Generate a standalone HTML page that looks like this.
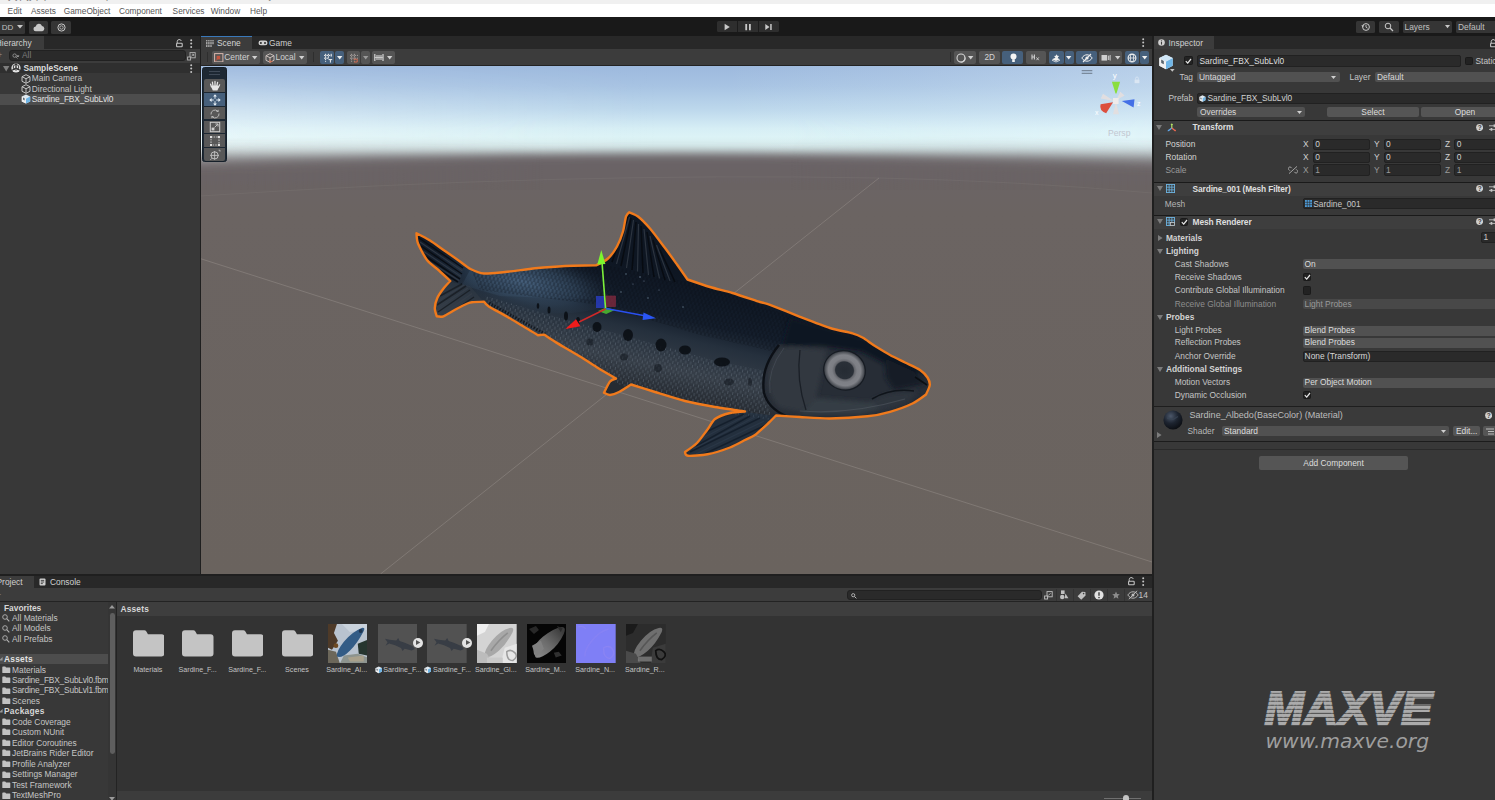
<!DOCTYPE html>
<html><head><meta charset="utf-8"><title>Unity - SampleScene</title>
<style>
*{box-sizing:border-box}
html,body{margin:0;padding:0}
html{overflow:hidden;width:1495px;height:800px;background:#383838}
body{width:1495px;height:800px;position:relative;overflow:hidden;background:#383838;font-family:"Liberation Sans",sans-serif;font-size:8.4px;color:#c6c6c6}
.a{position:absolute}
.t{position:absolute;white-space:nowrap;line-height:11px;height:11px}
.b{font-weight:700}
.dim{color:#8a8a8a}
.btn{position:absolute;background:#555;border-radius:2px}
.dd{position:absolute;background:#515151;border-radius:2px}
.fld{position:absolute;background:#2a2a2a;border-radius:2px;border:1px solid #212121}
.blue{background:#46607c}
.tb{position:absolute;background:#353535;border-radius:1.500px}
</style></head><body>

<div class="a" style="left:0px;top:0px;width:1495px;height:3.7px;background:#f0f0f0;"></div>
<div class="a" style="left:0;top:-9.800px;height:13px;width:1495px;overflow:hidden;color:#777;font-size:9px;line-height:13px;white-space:nowrap;padding-left:2px">Sy yp jy pq &nbsp; &nbsp; &nbsp; &nbsp; &nbsp; &nbsp; &nbsp; &nbsp; &nbsp; &nbsp; &nbsp; &nbsp;p &nbsp; &nbsp; &nbsp; &nbsp; &nbsp; &nbsp; &nbsp; &nbsp; &nbsp; &nbsp; &nbsp; &nbsp; &nbsp; &nbsp; &nbsp; &nbsp; &nbsp; &nbsp; &nbsp; &nbsp; &nbsp; &nbsp; &nbsp; &nbsp; &nbsp; &nbsp; &nbsp; &nbsp; &nbsp; &nbsp; &nbsp; y</div>
<div class="a" style="left:0px;top:3.5px;width:1495px;height:13.5px;background:#ffffff;"></div>
<div class="t " style="left:7.6px;top:5.9px;color:#555;font-size:8.3px">Edit</div>
<div class="t " style="left:31px;top:5.9px;color:#555;font-size:8.3px">Assets</div>
<div class="t " style="left:63.8px;top:5.9px;color:#555;font-size:8.3px">GameObject</div>
<div class="t " style="left:119px;top:5.9px;color:#555;font-size:8.3px">Component</div>
<div class="t " style="left:172.6px;top:5.9px;color:#555;font-size:8.3px">Services</div>
<div class="t " style="left:210.7px;top:5.9px;color:#555;font-size:8.3px">Window</div>
<div class="t " style="left:250px;top:5.9px;color:#555;font-size:8.3px">Help</div>
<div class="a" style="left:0px;top:17px;width:1495px;height:19px;background:#191919;"></div>
<div class="tb" style="left:-3px;top:20.5px;width:28px;height:13px"></div>
<div class="t " style="left:1.8px;top:21.5px;font-size:8px;color:#c0c0c0">DD</div>
<svg class="a" style="left:17px;top:24.5px;" width="6" height="4" viewBox="0 0 6 4"><path d="M0 0h6l-3 3.6z" fill="#c8c8c8"/></svg>
<div class="tb" style="left:28.5px;top:20.5px;width:19.5px;height:13px"></div>
<svg class="a" style="left:32.5px;top:22.5px;" width="12" height="9" viewBox="0 0 12 9"><path d="M3 8.2a2.4 2.4 0 0 1-.3-4.8A3.3 3.3 0 0 1 9 2.9a2.7 2.7 0 0 1 .3 5.3z" fill="#c8c8c8"/></svg>
<div class="tb" style="left:51px;top:20.5px;width:20px;height:13px"></div>
<svg class="a" style="left:56.5px;top:22.5px;" width="9" height="9" viewBox="0 0 9 9"><circle cx="4.5" cy="4.5" r="3.6" fill="none" stroke="#c8c8c8" stroke-width="1"/><circle cx="4.5" cy="4.5" r="1.7" fill="none" stroke="#c8c8c8" stroke-width=".8"/></svg>
<div class="tb" style="left:717px;top:20.5px;width:61.700px;height:11.800px;background:#2e2e2e"></div>
<div class="a" style="left:737.4px;top:20.5px;width:0.9px;height:11.8px;background:#1c1c1c;"></div><div class="a" style="left:757.8px;top:20.5px;width:0.9px;height:11.8px;background:#1c1c1c;"></div>
<svg class="a" style="left:717px;top:20.5px;" width="60" height="12.5" viewBox="0 0 60 12.5"><path d="M7.600 2.800l5.200 3.200-5.200 3.200z" fill="#c8c8c8"/><path d="M28.300 3h1.800v6.200h-1.800zM32 3h1.800v6.200H32z" fill="#c8c8c8"/><path d="M48.300 3l4.200 3-4.200 3zM53.200 3h1.500v6h-1.500z" fill="#c8c8c8"/></svg>
<div class="tb" style="left:1355.5px;top:20.5px;width:19.5px;height:12.5px"></div>
<svg class="a" style="left:1360.5px;top:22px;" width="10" height="10" viewBox="0 0 10 10"><circle cx="5" cy="5" r="3.4" fill="none" stroke="#c8c8c8" stroke-width="1"/><path d="M5 3v2.2l1.5 1" fill="none" stroke="#c8c8c8" stroke-width=".9"/><path d="M0.3 3.2l1.4 2 1.6-1.6z" fill="#c8c8c8"/></svg>
<div class="tb" style="left:1378.5px;top:20.5px;width:20px;height:12.5px"></div>
<svg class="a" style="left:1384px;top:22.2px;" width="10" height="10" viewBox="0 0 10 10"><circle cx="4" cy="4" r="2.8" fill="none" stroke="#c8c8c8" stroke-width="1"/><path d="M6 6l3 3" stroke="#c8c8c8" stroke-width="1.2"/></svg>
<div class="tb" style="left:1402.7px;top:20.5px;width:49.6px;height:12.5px"></div>
<div class="t " style="left:1404.5px;top:21.5px;color:#c0c0c0">Layers</div>
<svg class="a" style="left:1444.5px;top:25px;" width="5" height="4" viewBox="0 0 5 4"><path d="M0 0h5l-2.5 3.2z" fill="#c8c8c8"/></svg>
<div class="tb" style="left:1455.5px;top:20.5px;width:45px;height:12.5px"></div>
<div class="t " style="left:1458px;top:21.5px;color:#c0c0c0">Default</div>
<div class="a" style="left:0px;top:36px;width:200px;height:13px;background:#282828;"></div>
<div class="a" style="left:0px;top:36px;width:44px;height:13px;background:#3c3c3c;"></div>
<div class="t " style="left:-4.2px;top:37.7px;color:#d0d0d0">Hierarchy</div>
<svg class="a" style="left:175.8px;top:38.5px;" width="8" height="9" viewBox="0 0 8 9"><path d="M1.2 4.2V2.6a2.1 2.1 0 0 1 4.1-.6" fill="none" stroke="#c4c4c4" stroke-width="1"/><rect x=".6" y="4.2" width="5.6" height="3.6" rx=".7" fill="none" stroke="#c4c4c4" stroke-width="1.1"/></svg>
<svg class="a" style="left:190px;top:38.5px;" width="3" height="10" viewBox="0 0 3 10"><circle cx="1.2" cy="1.2" r="1" fill="#c4c4c4"/><circle cx="1.2" cy="4.6" r="1" fill="#c4c4c4"/><circle cx="1.2" cy="8" r="1" fill="#c4c4c4"/></svg>
<div class="a" style="left:0px;top:49px;width:200px;height:13.5px;background:#3c3c3c;"></div>
<div class="t " style="left:-3px;top:50.0px;color:#999;font-size:9px">+</div>
<div class="fld" style="left:9px;top:50.2px;width:176.5px;height:10.6px;border-radius:3px"></div>
<svg class="a" style="left:12px;top:53px;" width="8" height="7" viewBox="0 0 8 7"><circle cx="2.6" cy="2.6" r="1.7" fill="none" stroke="#a0a0a0" stroke-width=".8"/><path d="M3.8 3.8l1.800 1.800M4.800 2.800h2.200l-1.100 1.200z" stroke="#a0a0a0" stroke-width=".7" fill="#a0a0a0"/></svg>
<div class="t " style="left:22px;top:50.3px;color:#7c7c7c">All</div>
<svg class="a" style="left:187px;top:51.5px;" width="9" height="9" viewBox="0 0 9 9"><rect x="3" y=".6" width="5.2" height="5.2" fill="none" stroke="#b4b4b4" stroke-width=".9"/><rect x=".6" y="5" width="3" height="3" fill="#383838" stroke="#b4b4b4" stroke-width=".9"/><path d="M4.2 4.6l2.4-2.4M4.8 2.2h1.8v1.8" stroke="#b4b4b4" stroke-width=".8" fill="none"/></svg>
<div class="a" style="left:0px;top:62.5px;width:200px;height:1px;background:#232323;"></div>
<div class="a" style="left:0px;top:62.5px;width:200px;height:10.3px;background:#2f2f2f;"></div>
<svg class="a" style="left:3px;top:65.5px;" width="7" height="6" viewBox="0 0 7 6"><path d="M0 0h6.4L3.2 5.4z" fill="#7e7e7e"/></svg>
<svg class="a" style="left:11.3px;top:63.2px;" width="10" height="10" viewBox="0 0 10 10"><circle cx="5" cy="5" r="4.6" fill="#e4e4e4"/><path d="M5 5V.6M5 5l3.9 2.2M5 5L1.1 7.2" stroke="#2d2d2d" stroke-width="1.3"/><path d="M5 1.2l2.6 1.5v2.9L5 7.2 2.4 5.6V2.7z" fill="none" stroke="#2d2d2d" stroke-width=".9"/></svg>
<div class="t b" style="left:23.4px;top:62.7px;color:#dcdcdc">SampleScene</div>
<svg class="a" style="left:190px;top:63.6px;" width="3" height="10" viewBox="0 0 3 10"><circle cx="1.2" cy="1.2" r="1" fill="#c4c4c4"/><circle cx="1.2" cy="4.6" r="1" fill="#c4c4c4"/><circle cx="1.2" cy="8" r="1" fill="#c4c4c4"/></svg>
<svg class="a" style="left:20.5px;top:73.5px;" width="10" height="10" viewBox="0 0 10 10"><path d="M5 .7l4 2v4.6l-4 2-4-2V2.7z M1 2.7l4 2 4-2 M5 4.7v4.6" fill="none" stroke="#c8c8c8" stroke-width=".95" stroke-linejoin="round"/></svg>
<div class="t " style="left:31.8px;top:73.1px;">Main Camera</div>
<svg class="a" style="left:20.5px;top:84.2px;" width="10" height="10" viewBox="0 0 10 10"><path d="M5 .7l4 2v4.6l-4 2-4-2V2.7z M1 2.7l4 2 4-2 M5 4.7v4.6" fill="none" stroke="#c8c8c8" stroke-width=".95" stroke-linejoin="round"/></svg>
<div class="t " style="left:31.8px;top:83.8px;">Directional Light</div>
<div class="a" style="left:0px;top:94px;width:200px;height:10.7px;background:#4d4d4d;"></div>
<svg class="a" style="left:20.5px;top:94.3px;" width="10" height="10" viewBox="0 0 10 10"><path d="M5 .5l4.2 2.1v4.8L5 9.5.8 7.4V2.6z" fill="#dfe9f0"/><path d="M5 4.7l4.2-2.1v4.8L5 9.5z" fill="#6fb5e6"/><path d="M.8 2.6L5 4.7v4.8L.8 7.4z" fill="#eeeeee"/><path d="M2 3.4v2.2l1.6.8V4.2z" fill="#5a6670"/></svg>
<div class="t " style="left:31.8px;top:94.1px;color:#e0e0e0;letter-spacing:-.18px">Sardine_FBX_SubLvl0</div>
<div class="a" style="left:199.6px;top:36px;width:1.6px;height:540px;background:#1f1f1f;"></div><div class="a" style="left:201px;top:36px;width:951px;height:13px;background:#282828;"></div>
<div class="a" style="left:201px;top:36px;width:51px;height:13px;background:#3c3c3c;"></div>
<div class="a" style="left:201px;top:36px;width:51px;height:1.3px;background:#3a79bb;"></div>
<svg class="a" style="left:205.5px;top:39.5px;" width="8" height="7" viewBox="0 0 8 7"><path d="M.8 0v7M2.9 0v7M5 0v7M7 0v4.5" stroke="#c8c8c8" stroke-width="1.1"/><path d="M0 1.6h8M0 4.6h8" stroke="#3c3c3c" stroke-width=".6"/></svg>
<div class="t " style="left:217px;top:37.7px;color:#d6d6d6">Scene</div>
<svg class="a" style="left:257.5px;top:40.2px;" width="10" height="6" viewBox="0 0 10 6"><rect x=".5" y=".6" width="9" height="4.6" rx="2.3" fill="#d0d0d0"/><circle cx="2.9" cy="2.9" r="1" fill="#282828"/><circle cx="7" cy="2.9" r="1" fill="#282828"/></svg>
<div class="t " style="left:269px;top:37.7px;color:#d0d0d0">Game</div>
<svg class="a" style="left:1141.6px;top:38px;" width="3" height="10" viewBox="0 0 3 10"><circle cx="1.2" cy="1.2" r="1" fill="#c4c4c4"/><circle cx="1.2" cy="4.6" r="1" fill="#c4c4c4"/><circle cx="1.2" cy="8" r="1" fill="#c4c4c4"/></svg>
<div class="a" style="left:201px;top:49px;width:951px;height:17px;background:#3c3c3c;"></div>
<div class="a" style="left:201px;top:65px;width:951px;height:1px;background:#232323;"></div>
<div class="a" style="left:206.5px;top:52px;width:1px;height:10px;background:#2e2e2e;"></div>
<div class="btn " style="left:212px;top:51px;width:47.5px;height:13px"></div>
<svg class="a" style="left:214.2px;top:52.7px;" width="9.5" height="9.5" viewBox="0 0 9.5 9.5"><rect x=".6" y=".6" width="8.3" height="8.3" fill="none" stroke="#d8b7ad" stroke-width="1"/><rect x="2.6" y="2.8" width="3.6" height="3.6" fill="#c4553f"/><path d="M1.5 8l2.2-2.2" stroke="#c4553f" stroke-width=".9"/></svg>
<div class="t " style="left:224.2px;top:52.2px;color:#d0d0d0">Center</div>
<svg class="a" style="left:251.5px;top:56.2px;" width="6" height="4" viewBox="0 0 6 4"><path d="M0 0h5.4l-2.7 3.4z" fill="#d0d0d0"/></svg>
<div class="btn " style="left:263px;top:51px;width:43.5px;height:13px"></div>
<svg class="a" style="left:265.2px;top:52.5px;" width="10" height="10" viewBox="0 0 10 10"><path d="M5 .7l4 2v4.6l-4 2-4-2V2.7z M1 2.7l4 2 4-2 M5 4.7v4.6" fill="none" stroke="#cfc4c0" stroke-width=".95" stroke-linejoin="round"/><path d="M5 9.3V6.6M5 9.3L7.6 8" stroke="#d06a4a" stroke-width="1"/></svg>
<div class="t " style="left:275.5px;top:52.2px;color:#d0d0d0">Local</div>
<svg class="a" style="left:298.5px;top:56.2px;" width="6" height="4" viewBox="0 0 6 4"><path d="M0 0h5.4l-2.7 3.4z" fill="#d0d0d0"/></svg>
<div class="a" style="left:313px;top:52px;width:1px;height:10px;background:#2e2e2e;"></div>
<div class="btn blue" style="left:320.4px;top:51px;width:14px;height:13px"></div><div class="btn blue" style="left:335px;top:51px;width:8.7px;height:13px"></div>
<svg class="a" style="left:322.5px;top:52.8px;" width="10" height="10" viewBox="0 0 10 10"><path d="M1 2.4h8M1 5.2h5M2.6 .8v8M5.4 .8v5.2M8.2 .8v3" stroke="#f0f0f0" stroke-width="1" stroke-dasharray="1.6 .8"/><path d="M5.6 6.6h3.6M7.4 6.6v3" stroke="#f0f0f0" stroke-width="1"/></svg>
<svg class="a" style="left:336.8px;top:56.2px;" width="6" height="4" viewBox="0 0 6 4"><path d="M0 0h5.4l-2.7 3.4z" fill="#f0f0f0"/></svg>
<div class="btn " style="left:346.8px;top:51px;width:13.5px;height:13px"></div><div class="btn " style="left:361px;top:51px;width:9px;height:13px"></div>
<svg class="a" style="left:348.6px;top:52.8px;" width="10" height="10" viewBox="0 0 10 10"><path d="M1 2.4h8M1 5.2h8M2.6 .8v8M5.4 .8v8" stroke="#b0a9a6" stroke-width=".9" stroke-dasharray="1.4 .9"/><path d="M4.6 6.2h3.6v2.8H5" stroke="#cf6b52" stroke-width="1" fill="none"/></svg>
<svg class="a" style="left:362.8px;top:56.2px;" width="6" height="4" viewBox="0 0 6 4"><path d="M0 0h5.4l-2.7 3.4z" fill="#9a9a9a"/></svg>
<div class="btn " style="left:372.2px;top:51px;width:22.4px;height:13px"></div>
<svg class="a" style="left:374.2px;top:53.2px;" width="10" height="9" viewBox="0 0 10 9"><path d="M.8 1v7M9 1v7" stroke="#d4d4d4" stroke-width="1.2"/><path d="M3 2v5M5 2v5M7 2v5" stroke="#c2c2c2" stroke-width="1.3"/><path d="M.8 4.5h8" stroke="#d4d4d4" stroke-width=".8"/></svg>
<svg class="a" style="left:386.5px;top:56.2px;" width="6" height="4" viewBox="0 0 6 4"><path d="M0 0h5.4l-2.7 3.4z" fill="#d0d0d0"/></svg>
<div class="a" style="left:949.5px;top:52px;width:1px;height:10px;background:#2e2e2e;"></div>
<div class="btn " style="left:954.2px;top:51px;width:22px;height:13px"></div>
<svg class="a" style="left:956.3px;top:52.7px;" width="10" height="10" viewBox="0 0 10 10"><circle cx="5" cy="5" r="4" fill="none" stroke="#d4d4d4" stroke-width="1.1"/><path d="M7.6 2.2A4 4 0 1 1 2 7.4 3.6 3.6 0 0 0 7.6 2.2z" fill="#d4d4d4"/></svg>
<svg class="a" style="left:968.2px;top:56.2px;" width="6" height="4" viewBox="0 0 6 4"><path d="M0 0h5.4l-2.7 3.4z" fill="#d0d0d0"/></svg>
<div class="btn " style="left:979px;top:51px;width:20.7px;height:13px"></div>
<div class="t " style="left:984.5px;top:52.2px;color:#d6d6d6;font-size:8.2px">2D</div>
<div class="btn blue" style="left:1002.3px;top:51px;width:21px;height:13px"></div>
<svg class="a" style="left:1008.5px;top:52.6px;" width="9" height="10" viewBox="0 0 9 10"><circle cx="4.5" cy="3.5" r="3" fill="#f4f4f4"/><rect x="3.2" y="6.2" width="2.6" height="2.8" fill="#f4f4f4"/></svg>
<div class="btn " style="left:1025.8px;top:51px;width:20.7px;height:13px"></div>
<svg class="a" style="left:1031px;top:53.4px;" width="11" height="8" viewBox="0 0 11 8"><path d="M1 6.5V1.5M1 4h2.4M3.4 1.5v5" stroke="#cfcfcf" stroke-width="1.1"/><path d="M5.4 4.4l2.4 2.8M7.8 4.4L5.4 7.2" stroke="#cfcfcf" stroke-width=".9"/></svg>
<div class="btn blue" style="left:1049px;top:51px;width:14.6px;height:13px"></div><div class="btn blue" style="left:1064.5px;top:51px;width:9.1px;height:13px"></div>
<svg class="a" style="left:1051px;top:52.8px;" width="11" height="10" viewBox="0 0 11 10"><path d="M1 6.2l4-1.6 4 1.6-4 1.8z" fill="#f0f0f0"/><path d="M1 7.2l4 1.8 4-1.8" fill="none" stroke="#f0f0f0" stroke-width=".8"/><path d="M5.6 1.2l.8 1.6 1.8.2-1.3 1.2.3 1.8-1.6-.9-1.6.9.3-1.8L3 3l1.8-.2z" fill="#f0f0f0"/></svg>
<svg class="a" style="left:1066.4px;top:56.2px;" width="6" height="4" viewBox="0 0 6 4"><path d="M0 0h5.4l-2.7 3.4z" fill="#f0f0f0"/></svg>
<div class="btn blue" style="left:1076px;top:51px;width:20.7px;height:13px"></div>
<svg class="a" style="left:1080.5px;top:52.8px;" width="12" height="10" viewBox="0 0 12 10"><path d="M.8 5C2.4 2.6 4.2 1.8 6 1.8S9.6 2.6 11.2 5C9.6 7.4 7.8 8.2 6 8.2S2.4 7.4.8 5z" fill="none" stroke="#f0f0f0" stroke-width="1"/><circle cx="6" cy="5" r="1.6" fill="#f0f0f0"/><path d="M2 9L10 1" stroke="#f0f0f0" stroke-width="1.1"/></svg>
<div class="btn " style="left:1099.3px;top:51px;width:22.9px;height:13px"></div>
<svg class="a" style="left:1101.3px;top:53.6px;" width="10" height="8" viewBox="0 0 10 8"><rect x=".5" y="1" width="5.6" height="5.6" fill="#cfcfcf"/><path d="M6.8 1.6h1.6v4.4H6.8z" fill="#bdbdbd"/><path d="M9.2 1v5.6" stroke="#cfcfcf" stroke-width=".9"/></svg>
<svg class="a" style="left:1115.4px;top:56.2px;" width="6" height="4" viewBox="0 0 6 4"><path d="M0 0h5.4l-2.7 3.4z" fill="#d0d0d0"/></svg>
<div class="btn blue" style="left:1125.4px;top:51px;width:13.7px;height:13px"></div><div class="btn blue" style="left:1140px;top:51px;width:9.2px;height:13px"></div>
<svg class="a" style="left:1127.2px;top:52.5px;" width="10" height="10" viewBox="0 0 10 10"><circle cx="5" cy="5" r="3.9" fill="none" stroke="#f0f0f0" stroke-width="1.1"/><ellipse cx="5" cy="5" rx="1.7" ry="3.9" fill="none" stroke="#f0f0f0" stroke-width=".8"/><path d="M1.1 5h7.8" stroke="#f0f0f0" stroke-width=".8"/></svg>
<svg class="a" style="left:1141.9px;top:56.2px;" width="6" height="4" viewBox="0 0 6 4"><path d="M0 0h5.4l-2.7 3.4z" fill="#f0f0f0"/></svg><svg class="a" style="left:201px;top:66px" width="951" height="508" viewBox="201 66 951 508">
<defs>
<linearGradient id="sky" x1="0" y1="66" x2="0" y2="170" gradientUnits="userSpaceOnUse">
<stop offset="0" stop-color="#9db9de"/><stop offset=".2" stop-color="#a8c4e3"/><stop offset=".42" stop-color="#bdd8ec"/><stop offset=".6" stop-color="#d6eef5"/><stop offset=".68" stop-color="#dcf3f6"/><stop offset=".8" stop-color="#d3e6e7"/><stop offset="1" stop-color="#c0cccc"/>
</linearGradient>
<linearGradient id="skyl" x1="201" y1="0" x2="1152" y2="0" gradientUnits="userSpaceOnUse">
<stop offset="0" stop-color="#fff" stop-opacity=".3"/><stop offset=".3" stop-color="#fff" stop-opacity=".1"/><stop offset=".48" stop-color="#fff" stop-opacity="0"/><stop offset="1" stop-color="#fff" stop-opacity="0"/>
</linearGradient>
<linearGradient id="skyr" x1="201" y1="0" x2="1152" y2="0" gradientUnits="userSpaceOnUse">
<stop offset="0" stop-color="#eaf8ff" stop-opacity="0"/><stop offset=".55" stop-color="#eaf8ff" stop-opacity="0"/><stop offset=".75" stop-color="#eaf8ff" stop-opacity=".12"/><stop offset="1" stop-color="#eaf8ff" stop-opacity=".34"/>
</linearGradient>
<linearGradient id="gnd" x1="0" y1="150" x2="0" y2="574" gradientUnits="userSpaceOnUse">
<stop offset="0" stop-color="#6b6467"/><stop offset=".15" stop-color="#6b6462"/><stop offset="1" stop-color="#6a635e"/>
</linearGradient>
<linearGradient id="skmg" x1="0" y1="66" x2="0" y2="110" gradientUnits="userSpaceOnUse"><stop offset="0" stop-color="#fff" stop-opacity=".15"/><stop offset="1" stop-color="#fff" stop-opacity="1"/></linearGradient>
<mask id="skm" maskUnits="userSpaceOnUse" x="201" y="66" width="951" height="120"><rect x="201" y="66" width="951" height="120" fill="url(#skmg)"/></mask>
<filter id="b2" x="-10%" y="-10%" width="120%" height="120%"><feGaussianBlur stdDeviation="2.2"/></filter>
<filter id="hb" x="-5%" y="-20%" width="110%" height="140%"><feGaussianBlur stdDeviation="0 4.6"/></filter>
<filter id="hb2" x="-5%" y="-20%" width="110%" height="140%"><feGaussianBlur stdDeviation="0 7.2"/></filter>
<linearGradient id="hmg" x1="201" y1="0" x2="1152" y2="0" gradientUnits="userSpaceOnUse"><stop offset="0" stop-color="#fff"/><stop offset=".36" stop-color="#000"/><stop offset=".62" stop-color="#000"/><stop offset="1" stop-color="#fff"/></linearGradient>
<mask id="hm" maskUnits="userSpaceOnUse" x="201" y="66" width="951" height="160"><rect x="201" y="66" width="951" height="160" fill="url(#hmg)"/></mask>
<linearGradient id="fb" x1="652" y1="268" x2="626" y2="386" gradientUnits="userSpaceOnUse">
<stop offset="0" stop-color="#0e1622"/><stop offset=".36" stop-color="#141e2c"/><stop offset=".52" stop-color="#25303d"/><stop offset=".78" stop-color="#363e48"/><stop offset="1" stop-color="#262b32"/>
</linearGradient>
<radialGradient id="fl" cx="522" cy="281" r="95" gradientUnits="userSpaceOnUse" gradientTransform="translate(522 281) rotate(8) scale(1 .32) translate(-522 -281)">
<stop offset="0" stop-color="#46607c" stop-opacity=".85"/><stop offset=".6" stop-color="#34495f" stop-opacity=".5"/><stop offset="1" stop-color="#223040" stop-opacity="0"/>
</radialGradient>
<pattern id="sc" width="5" height="6" patternUnits="userSpaceOnUse" patternTransform="rotate(12)"><path d="M1 0v3.200M3.500 3v3" stroke="#65707c" stroke-width=".8" opacity=".6"/></pattern>
<pattern id="sc2" width="4" height="7" patternUnits="userSpaceOnUse" patternTransform="rotate(12)"><path d="M1 0v4M3 3.500v3.500" stroke="#060a10" stroke-width="1" opacity=".55"/></pattern>
<radialGradient id="eye" cx=".5" cy=".5" r=".5"><stop offset="0" stop-color="#252b33"/><stop offset=".44" stop-color="#2a3038"/><stop offset=".5" stop-color="#65676d"/><stop offset=".62" stop-color="#7d7f85"/><stop offset=".8" stop-color="#808288"/><stop offset=".9" stop-color="#5f6268"/><stop offset="1" stop-color="#3c4047"/></radialGradient>
<clipPath id="fc"><path d="M416.5 233.3 C416.5 233.3 426.4 238.3 430 240.5 C433.6 242.7 441.2 248.4 445 251 C448.8 253.6 456.8 259.2 460 261.5 C463.2 263.8 467.5 267.5 470.5 269 C473.5 270.5 479.7 273.1 484 273.5 C488.3 273.9 498.6 272.6 505 272 C511.4 271.4 527.5 269.1 535 268.3 C542.5 267.6 557.4 266.4 565 266 C572.6 265.6 596.0 265.3 596 265.3 C596.0 265.3 605.4 260.9 608 258.5 C610.6 256.1 615.1 249.9 617 246.5 C618.9 243.1 621.9 235.2 623 231.5 C624.1 227.8 625.2 218.9 626 216.5 C626.8 214.1 629.3 212.3 629.3 212.3 C629.3 212.3 635.4 214.5 638 216.5 C640.6 218.5 646.6 224.6 650 228.5 C653.4 232.4 661.6 243.5 665 248 C668.4 252.5 674.2 260.6 677 264.5 C679.8 268.4 687.5 279.5 687.5 279.5 C687.5 279.5 704.4 285.3 710 287 C715.6 288.7 726.2 291.1 732.5 293 C738.8 294.9 755.3 300.5 760 302 C764.7 303.5 765.0 302.9 770 304.8 C775.0 306.7 792.5 313.9 800 316.8 C807.5 319.7 823.4 325.9 830 328 C836.6 330.1 848.4 332.1 852.5 333.3 C856.6 334.5 860.2 336.2 863 337.8 C865.8 339.4 871.6 343.9 875 346 C878.4 348.1 886.2 352.9 890 355 C893.8 357.1 901.2 360.6 905 362.5 C908.8 364.4 917.2 368.1 920 370 C922.8 371.9 926.3 375.6 927.5 377.5 C928.7 379.4 930.0 382.9 929.8 385 C929.6 387.1 926.0 394.5 926 394.5 C926.0 394.5 917.0 401.3 912.5 403.5 C908.0 405.7 895.6 410.2 890 411.8 C884.4 413.4 875.0 415.5 867.5 416.3 C860.0 417.1 838.4 418.4 830 418.5 C821.6 418.6 806.8 417.4 800 417 C793.2 416.6 776.0 415.5 776 415.5 C776.0 415.5 771.1 420.6 768.5 423 C765.9 425.4 757.9 432.9 755 435 C752.1 437.1 748.1 438.4 745 440 C741.9 441.6 734.7 445.7 730 447.5 C725.3 449.3 712.8 453.3 707.5 454.3 C702.2 455.3 690.8 456.1 688 455.8 C685.2 455.5 685.0 452.0 685 452 C685.0 452.0 694.2 445.8 697 443 C699.8 440.2 705.2 432.5 707.5 429.5 C709.8 426.5 712.2 421.1 715 419 C717.8 416.9 726.2 413.9 730 413 C733.8 412.1 745.0 411.5 745 411.5 C745.0 411.5 722.5 408.3 715 407 C707.5 405.7 692.5 402.9 685 401 C677.5 399.1 661.8 394.1 655 392 C648.2 389.9 631.0 384.5 631 384.5 C631.0 384.5 621.6 390.7 619 392 C616.4 393.3 611.9 394.9 610 395 C608.1 395.1 604.0 392.8 604 392.8 C604.0 392.8 608.5 383.3 610 381.5 C611.5 379.7 616.0 378.5 616 378.5 C616.0 378.5 602.5 370.8 598 368 C593.5 365.2 585.2 359.7 580 356.5 C574.8 353.3 560.5 345.1 556 342.4 C551.5 339.7 544.0 334.6 544 334.6 C544.0 334.6 538.0 335.2 538 335.2 C538.0 335.2 529.8 330.2 526 328 C522.2 325.8 512.6 319.9 508 317.2 C503.4 314.5 491.8 308.3 488.8 306.4 C485.8 304.4 484.0 301.6 484 301.6 C484.0 301.6 474.1 302.0 472 302.2 C469.9 302.4 469.6 302.6 467.5 303.5 C465.4 304.4 458.5 307.9 455.5 309.5 C452.5 311.1 445.8 315.4 443.5 316.3 C441.2 317.2 436.8 316.3 436.8 316.3 C436.8 316.3 434.7 310.4 434.8 308 C434.9 305.6 436.4 299.9 437.5 297.5 C438.6 295.1 441.9 290.6 443.5 288.5 C445.1 286.4 450.3 281.0 450.3 281 C450.3 281.0 441.9 273.1 439 270.5 C436.1 267.9 429.6 263.4 427 260 C424.4 256.6 419.3 246.8 418 243.5 C416.7 240.2 416.5 233.3 416.5 233.3Z"/></clipPath>
</defs>
<rect x="201" y="66" width="951" height="120" fill="url(#sky)"/>
<rect x="201" y="66" width="951" height="120" fill="url(#skyl)" mask="url(#skm)"/>
<rect x="201" y="66" width="951" height="120" fill="url(#skyr)"/>
<path d="M150 159.500 Q676 146 1200 159.500 V600 H150Z" fill="url(#gnd)" filter="url(#hb)"/>
<g mask="url(#hm)"><rect x="201" y="120" width="951" height="80" fill="url(#sky)"/><rect x="201" y="120" width="951" height="80" fill="url(#skyl)"/><rect x="201" y="120" width="951" height="80" fill="url(#skyr)"/><path d="M150 158 Q676 145 1200 158 V600 H150Z" fill="url(#gnd)" filter="url(#hb2)"/></g>
<rect x="201" y="190" width="951" height="384" fill="url(#gnd)"/>
<g stroke="#a39c97" stroke-width="1" opacity=".38" fill="none">
<path d="M200 258.5 L1152 562"/><path d="M380.5 574 L879 178"/>
</g>
<g stroke="#8a837f" stroke-width="1" opacity=".22" fill="none">
<path d="M200 196 Q560 172 879 178 Q1020 181 1152 193"/>
</g>
<!-- fish -->
<path d="M416.5 233.3 C416.5 233.3 426.4 238.3 430 240.5 C433.6 242.7 441.2 248.4 445 251 C448.8 253.6 456.8 259.2 460 261.5 C463.2 263.8 467.5 267.5 470.5 269 C473.5 270.5 479.7 273.1 484 273.5 C488.3 273.9 498.6 272.6 505 272 C511.4 271.4 527.5 269.1 535 268.3 C542.5 267.6 557.4 266.4 565 266 C572.6 265.6 596.0 265.3 596 265.3 C596.0 265.3 605.4 260.9 608 258.5 C610.6 256.1 615.1 249.9 617 246.5 C618.9 243.1 621.9 235.2 623 231.5 C624.1 227.8 625.2 218.9 626 216.5 C626.8 214.1 629.3 212.3 629.3 212.3 C629.3 212.3 635.4 214.5 638 216.5 C640.6 218.5 646.6 224.6 650 228.5 C653.4 232.4 661.6 243.5 665 248 C668.4 252.5 674.2 260.6 677 264.5 C679.8 268.4 687.5 279.5 687.5 279.5 C687.5 279.5 704.4 285.3 710 287 C715.6 288.7 726.2 291.1 732.5 293 C738.8 294.9 755.3 300.5 760 302 C764.7 303.5 765.0 302.9 770 304.8 C775.0 306.7 792.5 313.9 800 316.8 C807.5 319.7 823.4 325.9 830 328 C836.6 330.1 848.4 332.1 852.5 333.3 C856.6 334.5 860.2 336.2 863 337.8 C865.8 339.4 871.6 343.9 875 346 C878.4 348.1 886.2 352.9 890 355 C893.8 357.1 901.2 360.6 905 362.5 C908.8 364.4 917.2 368.1 920 370 C922.8 371.9 926.3 375.6 927.5 377.5 C928.7 379.4 930.0 382.9 929.8 385 C929.6 387.1 926.0 394.5 926 394.5 C926.0 394.5 917.0 401.3 912.5 403.5 C908.0 405.7 895.6 410.2 890 411.8 C884.4 413.4 875.0 415.5 867.5 416.3 C860.0 417.1 838.4 418.4 830 418.5 C821.6 418.6 806.8 417.4 800 417 C793.2 416.6 776.0 415.5 776 415.5 C776.0 415.5 771.1 420.6 768.5 423 C765.9 425.4 757.9 432.9 755 435 C752.1 437.1 748.1 438.4 745 440 C741.9 441.6 734.7 445.7 730 447.5 C725.3 449.3 712.8 453.3 707.5 454.3 C702.2 455.3 690.8 456.1 688 455.8 C685.2 455.5 685.0 452.0 685 452 C685.0 452.0 694.2 445.8 697 443 C699.8 440.2 705.2 432.5 707.5 429.5 C709.8 426.5 712.2 421.1 715 419 C717.8 416.9 726.2 413.9 730 413 C733.8 412.1 745.0 411.5 745 411.5 C745.0 411.5 722.5 408.3 715 407 C707.5 405.7 692.5 402.9 685 401 C677.5 399.1 661.8 394.1 655 392 C648.2 389.9 631.0 384.5 631 384.5 C631.0 384.5 621.6 390.7 619 392 C616.4 393.3 611.9 394.9 610 395 C608.1 395.1 604.0 392.8 604 392.8 C604.0 392.8 608.5 383.3 610 381.5 C611.5 379.7 616.0 378.5 616 378.5 C616.0 378.5 602.5 370.8 598 368 C593.5 365.2 585.2 359.7 580 356.5 C574.8 353.3 560.5 345.1 556 342.4 C551.5 339.7 544.0 334.6 544 334.6 C544.0 334.6 538.0 335.2 538 335.2 C538.0 335.2 529.8 330.2 526 328 C522.2 325.8 512.6 319.9 508 317.2 C503.4 314.5 491.8 308.3 488.8 306.4 C485.8 304.4 484.0 301.6 484 301.6 C484.0 301.6 474.1 302.0 472 302.2 C469.9 302.4 469.6 302.6 467.5 303.5 C465.4 304.4 458.5 307.9 455.5 309.5 C452.5 311.1 445.8 315.4 443.5 316.3 C441.2 317.2 436.8 316.3 436.8 316.3 C436.8 316.3 434.7 310.4 434.8 308 C434.9 305.6 436.4 299.9 437.5 297.5 C438.6 295.1 441.9 290.6 443.5 288.5 C445.1 286.4 450.3 281.0 450.3 281 C450.3 281.0 441.9 273.1 439 270.5 C436.1 267.9 429.6 263.4 427 260 C424.4 256.6 419.3 246.8 418 243.5 C416.7 240.2 416.5 233.3 416.5 233.3Z" fill="url(#fb)"/>
<g clip-path="url(#fc)">
<path d="M470 270 L600 266 L640 275 L600 300 L500 296 L462 285Z" fill="url(#fl)"/>
<ellipse cx="522" cy="281" rx="95" ry="30" fill="url(#fl)" transform="rotate(8 522 281)"/>
<path d="M486 296 L560 318 L640 340 L720 362 L770 372 L770 420 L700 410 L620 385 L540 340 L484 304Z" fill="url(#sc)"/>
<path d="M470 268 L600 264 L700 284 L790 316 L775 352 L700 335 L600 305 L480 290Z" fill="url(#sc2)"/>
<!-- head -->
<path d="M779 344 Q760 368 764 394 Q768 410 790 420 L935 420 L935 376 L872 338 Z" fill="#272d36"/>
<g filter="url(#b2)">
<path d="M790 318 L872 340 L930 374 L900 372 L862 352 L820 346 L782 346Z" fill="#0e1623"/>
<path d="M772 358 Q776 348 790 346 L827 350 L816 398 L800 412 L780 408 Q766 396 768 372Z" fill="#333941"/>
<path d="M816 398 L868 402 L905 396 L900 405 L860 414 L800 414Z" fill="#363c45"/>
<path d="M884 358 L915 372 L926 384 L894 390 L886 378Z" fill="#161c26"/>
<path d="M872 400 Q890 390 918 392 L905 404 L878 408Z" fill="#2e343d"/>
</g>
<path d="M779 345 Q760 368 764 393 Q768 408 786 416" fill="none" stroke="#0c1016" stroke-width="2.400"/>
<path d="M781 347 Q764 369 767 392" fill="none" stroke="#4b525b" stroke-width="1" opacity=".6" transform="translate(3 1)"/>
<path d="M800 350 Q796 380 806 410" fill="none" stroke="#161b22" stroke-width="1.300" opacity=".85"/>
<path d="M872 399 Q890 388 914 391" fill="none" stroke="#0f141a" stroke-width="1.500"/>
<path d="M800 411 Q850 415 905 399" fill="none" stroke="#50565f" stroke-width="1.200" opacity=".6"/>
<path d="M915 377 L927 385" stroke="#0a0e13" stroke-width="1.600"/>
<!-- fin rays -->
<g stroke="#070a0f" stroke-width="1.500" opacity=".85" fill="none">
<path d="M628 216 L612 262M631 218 L621 266M636 222 L632 270M641 226 L643 273M647 232 L654 277M653 240 L665 280M660 250 L675 282"/>
<path d="M419 238 L463 268M421 246 L462 274M425 256 L460 279M432 266 L458 282"/>
<path d="M438 312 L470 290M437 305 L466 286M440 296 L462 284M446 316 L474 297"/>
<path d="M690 452 L760 418M696 446 L750 416M706 432 L744 414M702 455 L768 424"/>
</g>
<g stroke="#343c47" stroke-width="1.200" opacity=".8" fill="none">
<path d="M629.500 217 L616.500 264M633.500 220 L626.500 268M638.500 224 L637.500 271.500M644 229 L648.500 275M650 236 L659.500 278.500M656.500 245 L670 281"/>
<path d="M420 242 L462.500 271M423 251 L461 276.500M428.500 261 L459 280.500"/>
<path d="M437.500 308.500 L468 288M438.500 300.500 L464 285M442 314.500 L472 293.500"/>
<path d="M693 449 L755 417M701 439 L747 415M696 454 L764 421"/>
</g>
<path d="M436 316 L444 316 L468 303 L482 300 L470 286 L452 282 L444 289 L436 300Z" fill="#3a414b" opacity=".35"/>
<path d="M686 454 L700 438 L716 419 L745 412 L774 416 L752 436 L710 454Z" fill="#22364c" opacity=".45"/>
<!-- spots -->
<g fill="#0b0f15" opacity=".9">
<ellipse cx="597" cy="327" rx="4.5" ry="5"/><ellipse cx="628" cy="335" rx="5" ry="6"/><ellipse cx="661" cy="345" rx="5.5" ry="6.5"/><ellipse cx="685" cy="350" rx="6" ry="4.5"/><ellipse cx="722" cy="362" rx="8" ry="4.5"/>
<ellipse cx="566" cy="316" rx="2" ry="4.5"/><ellipse cx="578" cy="321" rx="2" ry="4"/><ellipse cx="549" cy="310" rx="1.5" ry="3.5"/><ellipse cx="538" cy="306" rx="1.3" ry="3"/>
</g>
<g fill="#0b0f15" opacity=".45">
<ellipse cx="590" cy="342" rx="3.5" ry="3.5"/><ellipse cx="624" cy="357" rx="4" ry="3.5"/><ellipse cx="658" cy="368" rx="4" ry="4"/><ellipse cx="729" cy="382" rx="5" ry="3.5"/><ellipse cx="750" cy="382" rx="2" ry="4"/>
</g>
<!-- sparkle -->
<g fill="#8fa6bd" opacity=".7"><circle cx="626" cy="274" r=".7"/><circle cx="640" cy="277" r=".8"/><circle cx="644" cy="281" r=".6"/><circle cx="621" cy="292" r=".7"/><circle cx="648" cy="298" r=".7"/><circle cx="659" cy="290" r=".6"/><circle cx="683" cy="307" r=".7"/><circle cx="633" cy="284" r=".6"/></g>
<!-- anal fin stripes -->
<path d="M489 303 L545 334" stroke="#0d1117" stroke-width="3" stroke-dasharray="1.4 1.6" opacity=".8"/>
</g>
<ellipse cx="844.5" cy="370.3" rx="21.6" ry="20.200" fill="#161b22" transform="rotate(20 844.5 370.3)"/><ellipse cx="844.5" cy="370.3" rx="20.400" ry="19" fill="url(#eye)" transform="rotate(20 844.5 370.3)"/>
<path d="M416.5 233.3 C416.5 233.3 426.4 238.3 430 240.5 C433.6 242.7 441.2 248.4 445 251 C448.8 253.6 456.8 259.2 460 261.5 C463.2 263.8 467.5 267.5 470.5 269 C473.5 270.5 479.7 273.1 484 273.5 C488.3 273.9 498.6 272.6 505 272 C511.4 271.4 527.5 269.1 535 268.3 C542.5 267.6 557.4 266.4 565 266 C572.6 265.6 596.0 265.3 596 265.3 C596.0 265.3 605.4 260.9 608 258.5 C610.6 256.1 615.1 249.9 617 246.5 C618.9 243.1 621.9 235.2 623 231.5 C624.1 227.8 625.2 218.9 626 216.5 C626.8 214.1 629.3 212.3 629.3 212.3 C629.3 212.3 635.4 214.5 638 216.5 C640.6 218.5 646.6 224.6 650 228.5 C653.4 232.4 661.6 243.5 665 248 C668.4 252.5 674.2 260.6 677 264.5 C679.8 268.4 687.5 279.5 687.5 279.5 C687.5 279.5 704.4 285.3 710 287 C715.6 288.7 726.2 291.1 732.5 293 C738.8 294.9 755.3 300.5 760 302 C764.7 303.5 765.0 302.9 770 304.8 C775.0 306.7 792.5 313.9 800 316.8 C807.5 319.7 823.4 325.9 830 328 C836.6 330.1 848.4 332.1 852.5 333.3 C856.6 334.5 860.2 336.2 863 337.8 C865.8 339.4 871.6 343.9 875 346 C878.4 348.1 886.2 352.9 890 355 C893.8 357.1 901.2 360.6 905 362.5 C908.8 364.4 917.2 368.1 920 370 C922.8 371.9 926.3 375.6 927.5 377.5 C928.7 379.4 930.0 382.9 929.8 385 C929.6 387.1 926.0 394.5 926 394.5 C926.0 394.5 917.0 401.3 912.5 403.5 C908.0 405.7 895.6 410.2 890 411.8 C884.4 413.4 875.0 415.5 867.5 416.3 C860.0 417.1 838.4 418.4 830 418.5 C821.6 418.6 806.8 417.4 800 417 C793.2 416.6 776.0 415.5 776 415.5 C776.0 415.5 771.1 420.6 768.5 423 C765.9 425.4 757.9 432.9 755 435 C752.1 437.1 748.1 438.4 745 440 C741.9 441.6 734.7 445.7 730 447.5 C725.3 449.3 712.8 453.3 707.5 454.3 C702.2 455.3 690.8 456.1 688 455.8 C685.2 455.5 685.0 452.0 685 452 C685.0 452.0 694.2 445.8 697 443 C699.8 440.2 705.2 432.5 707.5 429.5 C709.8 426.5 712.2 421.1 715 419 C717.8 416.9 726.2 413.9 730 413 C733.8 412.1 745.0 411.5 745 411.5 C745.0 411.5 722.5 408.3 715 407 C707.5 405.7 692.5 402.9 685 401 C677.5 399.1 661.8 394.1 655 392 C648.2 389.9 631.0 384.5 631 384.5 C631.0 384.5 621.6 390.7 619 392 C616.4 393.3 611.9 394.9 610 395 C608.1 395.1 604.0 392.8 604 392.8 C604.0 392.8 608.5 383.3 610 381.5 C611.5 379.7 616.0 378.5 616 378.5 C616.0 378.5 602.5 370.8 598 368 C593.5 365.2 585.2 359.7 580 356.5 C574.8 353.3 560.5 345.1 556 342.4 C551.5 339.7 544.0 334.6 544 334.6 C544.0 334.6 538.0 335.2 538 335.2 C538.0 335.2 529.8 330.2 526 328 C522.2 325.8 512.6 319.9 508 317.2 C503.4 314.5 491.8 308.3 488.8 306.4 C485.8 304.4 484.0 301.6 484 301.6 C484.0 301.6 474.1 302.0 472 302.2 C469.9 302.4 469.6 302.6 467.5 303.5 C465.4 304.4 458.5 307.9 455.5 309.5 C452.5 311.1 445.8 315.4 443.5 316.3 C441.2 317.2 436.8 316.3 436.8 316.3 C436.8 316.3 434.7 310.4 434.8 308 C434.9 305.6 436.4 299.9 437.5 297.5 C438.6 295.1 441.9 290.6 443.5 288.5 C445.1 286.4 450.3 281.0 450.3 281 C450.3 281.0 441.9 273.1 439 270.5 C436.1 267.9 429.6 263.4 427 260 C424.4 256.6 419.3 246.8 418 243.5 C416.7 240.2 416.5 233.3 416.5 233.3Z" fill="none" stroke="#f07a1c" stroke-width="2.4" stroke-linejoin="round"/>
<!-- gizmo -->
<g>
<path d="M596 296h9v12h-9z" fill="#2a3fd0" opacity=".75"/><path d="M606 296h9.5v10.5H606z" fill="#b03048" opacity=".55" stroke="#c83050" stroke-width=".7"/>
<path d="M598 311l8-3.6 8.8 2.6-8.6 4z" fill="#4fc030" opacity=".85"/>
<path d="M605.5 308 L602 262" stroke="#7cf03a" stroke-width="1.6"/>
<path d="M601.3 250 L605.4 264 L597.3 264.4Z" fill="#7cf52e"/>
<path d="M606 308.5 L646 316" stroke="#2a50f0" stroke-width="1.6"/>
<path d="M656 318.3 L643.5 312.4 L642.6 320Z" fill="#2a56f5"/>
<path d="M605.5 309 L579 322" stroke="#d02828" stroke-width="1.5"/>
<path d="M565.4 329 L576 319.3 L580.4 326.2Z" fill="#f01c1c"/>
</g>
<!-- orientation gizmo -->
<g>
<path d="M1081.700 70.700h10.600M1081.700 73.300h10.600" stroke="#4a5460" stroke-width=".7"/>
<path d="M1114 101 L1100.8 98.6 L1103 93.8Z M1116.5 100 L1120.3 91.8 L1124.6 95.6Z M1116 101.5 L1113 114.2 L1119 114.2Z" fill="#e4dede" opacity=".92"/>
<path d="M1111.900 81.800h8.200l-3.600 11.600h-1z" fill="#8ade3e"/>
<path d="M1121.800 101 L1134.500 99.200 L1133.600 107.600Z" fill="#4470e6"/>
<path d="M1113 102.300 L1100.600 104.200 Q1098.800 110.500 1106.200 113.200Z" fill="#dc4f3e"/>
<rect x="1113" y="98" width="5.6" height="6" fill="#efeaea"/>
<text x="1112.8" y="78" font-family="Liberation Sans, sans-serif" font-size="8" fill="#ffffff">y</text>
<text x="1095" y="114.5" font-family="Liberation Sans, sans-serif" font-size="7" fill="#ffffff">x</text>
<text x="1137" y="105.5" font-family="Liberation Sans, sans-serif" font-size="7" fill="#ffffff">z</text>
<text x="1108" y="136.3" font-family="Liberation Sans, sans-serif" font-size="8.6" fill="#c2c7d0">Persp</text>
<g opacity=".55"><rect x="1134.6" y="79.6" width="4.8" height="3.6" fill="#f4f6fa"/><path d="M1135.6 79.6v-1.2a1.4 1.4 0 0 1 2.8 0v1.2" fill="none" stroke="#f4f6fa" stroke-width=".8"/></g>
</g>
</svg>
<div class="a" style="left:202px;top:67px;width:24.5px;height:95px;background:#1d2833;border-radius:2.5px;border:1px solid #16202a"></div>
<div class="a" style="left:209px;top:71.2px;width:10.5px;height:1px;background:#3f4a57"></div><div class="a" style="left:209px;top:73.6px;width:10.5px;height:1px;background:#3f4a57"></div>
<div class="a" style="left:204.2px;top:79px;width:20.6px;height:12.7px;background:#585858;border-radius:2px 2px 0 0"></div>
<div class="a" style="left:204.2px;top:93px;width:20.6px;height:12.7px;background:#46607c;border-radius:0"></div>
<div class="a" style="left:204.2px;top:106.8px;width:20.6px;height:12.7px;background:#585858;border-radius:0"></div>
<div class="a" style="left:204.2px;top:120.6px;width:20.6px;height:12.7px;background:#585858;border-radius:0"></div>
<div class="a" style="left:204.2px;top:134.4px;width:20.6px;height:12.7px;background:#585858;border-radius:0"></div>
<div class="a" style="left:204.2px;top:148.2px;width:20.6px;height:12.7px;background:#585858;border-radius:0 0 2px 2px"></div>
<svg class="a" style="left:208.5px;top:79.5px" width="12" height="12" viewBox="0 0 12 12"><path d="M2.4 6.8L1.6 4.2M4 6L3.4 2.2M6 5.8V1.4M7.8 6l.8-3.600M9.4 7.200l1.200-2.400" stroke="#e6e6e6" stroke-width="1.250" stroke-linecap="round"/><path d="M2 6.400l1.800 4.200h4.600l1.800-4-1.400-1.200H3z" fill="#e6e6e6"/></svg>
<svg class="a" style="left:208.5px;top:93.5px" width="12" height="12" viewBox="0 0 12 12"><path d="M6 1.500v3.300M6 7.200v3.300M1.500 6h3.300M7.200 6h3.300" stroke="#e8f0f8" stroke-width=".9"/><path d="M6 .3l1.9 2.3H4.1zM6 11.7l1.9-2.3H4.1zM.3 6l2.3-1.9v3.8zM11.700 6L9.4 4.100v3.800z" fill="#e8f0f8"/></svg>
<svg class="a" style="left:208.5px;top:107.5px" width="12" height="12" viewBox="0 0 12 12"><path d="M2 6.500A4 4 0 0 1 8.800 3.200M10 5.500A4 4 0 0 1 3.200 8.800" fill="none" stroke="#b8b8b8" stroke-width="1"/><path d="M9.600 1.500v2.600H7zM2.400 10.500V7.900H5z" fill="#b8b8b8"/></svg>
<svg class="a" style="left:208.5px;top:121.2px" width="12" height="12" viewBox="0 0 12 12"><rect x="1.300" y="1.300" width="9.400" height="9.400" fill="none" stroke="#d0d0d0" stroke-width="1"/><rect x="2.600" y="6.600" width="2.800" height="2.800" fill="#d0d0d0"/><path d="M5.600 6.400l3.200-3.200M6.400 3h2.600v2.600" stroke="#d0d0d0" stroke-width=".9" fill="none"/></svg>
<svg class="a" style="left:208.5px;top:135px" width="12" height="12" viewBox="0 0 12 12"><rect x="2" y="2" width="8" height="8" fill="none" stroke="#d0d0d0" stroke-width=".9" stroke-dasharray="1.600 1"/><g fill="#e0e0e0"><rect x="1" y="1" width="2" height="2"/><rect x="9" y="1" width="2" height="2"/><rect x="1" y="9" width="2" height="2"/><rect x="9" y="9" width="2" height="2"/></g></svg>
<svg class="a" style="left:208.5px;top:148.5px" width="12" height="12" viewBox="0 0 12 12"><circle cx="5.600" cy="6.400" r="3.600" fill="none" stroke="#c8c8c8" stroke-width=".9"/><path d="M5.600 2v8.800M1.200 6.400H10" stroke="#c8c8c8" stroke-width=".8"/><path d="M1.200 11l1.800-1.800M9.600 1.200h1.400v1.400" stroke="#c8c8c8" stroke-width=".8" fill="none"/></svg><div class="a" style="left:1152px;top:36px;width:1.6px;height:764px;background:#1f1f1f;"></div>
<div class="a" style="left:1153.5px;top:36px;width:342px;height:13px;background:#282828;"></div>
<div class="a" style="left:1153.5px;top:36px;width:60px;height:13px;background:#3c3c3c;"></div>
<svg class="a" style="left:1158px;top:39.2px;" width="7" height="7" viewBox="0 0 7 7"><circle cx="3.500" cy="3.500" r="3.300" fill="#d0d0d0"/><path d="M3.500 3v2.600" stroke="#3c3c3c" stroke-width="1.100"/><circle cx="3.500" cy="1.800" r=".65" fill="#3c3c3c"/></svg>
<div class="t " style="left:1168.5px;top:37.7px;color:#d0d0d0">Inspector</div>
<svg class="a" style="left:1490px;top:38.5px;" width="8" height="9" viewBox="0 0 8 9"><path d="M1.2 4.2V2.6a2.1 2.1 0 0 1 4.1-.6" fill="none" stroke="#c4c4c4" stroke-width="1"/><rect x=".6" y="4.2" width="5.6" height="3.6" rx=".7" fill="none" stroke="#c4c4c4" stroke-width="1.1"/></svg>
<svg class="a" style="left:1157.5px;top:54px;" width="16" height="16" viewBox="0 0 16 16"><path d="M8 .8l6.700 3.300v7.700L8 15.200 1.300 11.800V4.100z" fill="#dfe9f0"/><path d="M8 7.500l6.700-3.400v7.700L8 15.200z" fill="#6fb5e6"/><path d="M1.300 4.100L8 7.500v7.700L1.300 11.800z" fill="#f0f0f0"/><path d="M3.200 5.600v3.400l2.600 1.300V6.900z" fill="#56626c"/><path d="M8 .8l6.700 3.300L8 7.500 1.300 4.100z" fill="#cfe6f6"/></svg>
<svg class="a" style="left:1169.5px;top:69px;" width="5" height="3" viewBox="0 0 5 3"><path d="M0 0h4.600l-2.300 2.800z" fill="#c4c4c4"/></svg>
<div class="a" style="left:1184px;top:56.3px;width:8.6px;height:8.6px;background:#222;border:1px solid #1a1a1a;border-radius:1.500px"></div><svg class="a" style="left:1185px;top:57.5px;" width="7" height="6" viewBox="0 0 7 6"><path d="M.8 3.200l1.900 1.900L6 1" fill="none" stroke="#e8e8e8" stroke-width="1.200"/></svg>
<div class="fld" style="left:1197.3px;top:54.900px;width:264px;height:11.700px"></div>
<div class="t " style="left:1199.5px;top:55.9px;color:#dedede">Sardine_FBX_SubLvl0</div>
<div class="a" style="left:1464.6px;top:56.5px;width:8.6px;height:8.6px;background:#222;border:1px solid #1a1a1a;border-radius:1.500px"></div>
<div class="t " style="left:1475.5px;top:55.9px;">Static</div>
<div class="t " style="left:1179.5px;top:71.7px;">Tag</div>
<div class="dd" style="left:1197px;top:72px;width:142.700px;height:10.300px"></div>
<div class="t " style="left:1199px;top:71.7px;color:#dadada">Untagged</div>
<svg class="a" style="left:1331px;top:75.6px;" width="5" height="4" viewBox="0 0 5 4"><path d="M0 0h5l-2.500 3z" fill="#d0d0d0"/></svg>
<div class="t " style="left:1349.5px;top:71.7px;">Layer</div>
<div class="dd" style="left:1375px;top:72px;width:125px;height:10.300px"></div>
<div class="t " style="left:1377px;top:71.7px;color:#dadada">Default</div>
<div class="t " style="left:1168.5px;top:92.7px;">Prefab</div>
<div class="fld" style="left:1197px;top:92.500px;width:300px;height:11px"></div>
<svg class="a" style="left:1199px;top:94.7px;" width="7" height="7" viewBox="0 0 10 10"><path d="M5 .5l4.2 2.1v4.8L5 9.5.8 7.4V2.6z" fill="#dfe9f0"/><path d="M5 4.7l4.2-2.1v4.8L5 9.5z" fill="#6fb5e6"/><path d="M.8 2.6L5 4.7v4.8L.8 7.4z" fill="#eeeeee"/><path d="M2 3.4v2.2l1.6.8V4.2z" fill="#5a6670"/></svg>
<div class="t " style="left:1207.5px;top:92.7px;color:#d0d0d0">Sardine_FBX_SubLvl0</div>
<div class="dd" style="left:1197px;top:107px;width:107.500px;height:10px"></div>
<div class="t " style="left:1200px;top:106.7px;color:#dadada">Overrides</div>
<svg class="a" style="left:1296.5px;top:110.5px;" width="5" height="4" viewBox="0 0 5 4"><path d="M0 0h5l-2.500 3z" fill="#d0d0d0"/></svg>
<div class="btn" style="left:1327px;top:107px;width:92px;height:10px"></div>
<div class="t " style="left:1327px;top:106.7px;width:92px;text-align:center;color:#dedede">Select</div>
<div class="btn" style="left:1421px;top:107px;width:80px;height:10px"></div>
<div class="t " style="left:1421px;top:106.7px;width:88px;text-align:center;color:#dedede">Open</div>
<div class="a" style="left:1153.5px;top:120px;width:342px;height:1px;background:#1a1a1a;"></div><div class="a" style="left:1153.5px;top:121px;width:342px;height:13.5px;background:#3e3e3e;"></div>
<svg class="a" style="left:1156.3px;top:125px;" width="7" height="6" viewBox="0 0 7 6"><path d="M0 0h6l-3 5z" fill="#7c7c7c"/></svg>
<svg class="a" style="left:1166.8px;top:123.2px;" width="9.6" height="9.6" viewBox="0 0 11 11"><path d="M5.500 5.800V1.400" stroke="#b4e468" stroke-width="1.400"/><path d="M5.500 5.800L1.600 8.800" stroke="#62aaf0" stroke-width="1.400"/><path d="M5.500 5.800l4 3" stroke="#f06a52" stroke-width="1.400"/><path d="M5.500 .2l1.500 2H4z" fill="#b4e468"/><path d="M.6 9.600l.7-2.200 1.500 1.700z" fill="#62aaf0"/><path d="M10.400 9.600l-.7-2.200-1.500 1.700z" fill="#f06a52"/></svg>
<div class="t b" style="left:1192.6px;top:122.3px;color:#dedede">Transform</div>
<svg class="a" style="left:1476px;top:124.2px;" width="7.2" height="7.2" viewBox="0 0 7.2 7.2"><circle cx="3.600" cy="3.600" r="3.500" fill="#d0d0d0"/><text x="3.600" y="5.900" font-size="6.400" font-weight="700" text-anchor="middle" fill="#3e3e3e" font-family="Liberation Sans, sans-serif">?</text></svg><svg class="a" style="left:1489px;top:124.2px;" width="8" height="7.2" viewBox="0 0 8 7.2"><path d="M0 1.800h8M0 5.400h8" stroke="#c4c4c4" stroke-width=".9"/><rect x="4.600" y=".4" width="1.700" height="2.800" fill="#c4c4c4"/><rect x="1.600" y="4" width="1.700" height="2.800" fill="#c4c4c4"/></svg>
<div class="t " style="left:1165.5px;top:138.6px;color:#d2d2d2">Position</div><div class="t " style="left:1303px;top:138.6px;color:#d2d2d2">X</div><div class="fld" style="left:1312.7px;top:138.5px;width:57.5px;height:11.200px"></div><div class="t " style="left:1315.2px;top:138.6px;color:#d2d2d2">0</div><div class="t " style="left:1374px;top:138.6px;color:#d2d2d2">Y</div><div class="fld" style="left:1383.6px;top:138.5px;width:57.5px;height:11.200px"></div><div class="t " style="left:1386.1px;top:138.6px;color:#d2d2d2">0</div><div class="t " style="left:1445px;top:138.6px;color:#d2d2d2">Z</div><div class="fld" style="left:1454.3px;top:138.5px;width:50px;height:11.200px"></div><div class="t " style="left:1456.8px;top:138.6px;color:#d2d2d2">0</div>
<div class="t " style="left:1165.5px;top:151.8px;color:#d2d2d2">Rotation</div><div class="t " style="left:1303px;top:151.8px;color:#d2d2d2">X</div><div class="fld" style="left:1312.7px;top:151.7px;width:57.5px;height:11.200px"></div><div class="t " style="left:1315.2px;top:151.8px;color:#d2d2d2">0</div><div class="t " style="left:1374px;top:151.8px;color:#d2d2d2">Y</div><div class="fld" style="left:1383.6px;top:151.7px;width:57.5px;height:11.200px"></div><div class="t " style="left:1386.1px;top:151.8px;color:#d2d2d2">0</div><div class="t " style="left:1445px;top:151.8px;color:#d2d2d2">Z</div><div class="fld" style="left:1454.3px;top:151.7px;width:50px;height:11.200px"></div><div class="t " style="left:1456.8px;top:151.8px;color:#d2d2d2">0</div>
<div class="t " style="left:1165.5px;top:164.5px;color:#9a9a9a">Scale</div><div class="t " style="left:1303px;top:164.5px;color:#9a9a9a">X</div><div class="fld" style="left:1312.7px;top:164.4px;width:57.5px;height:11.200px"></div><div class="t " style="left:1315.2px;top:164.5px;color:#9a9a9a">1</div><div class="t " style="left:1374px;top:164.5px;color:#9a9a9a">Y</div><div class="fld" style="left:1383.6px;top:164.4px;width:57.5px;height:11.200px"></div><div class="t " style="left:1386.1px;top:164.5px;color:#9a9a9a">1</div><div class="t " style="left:1445px;top:164.5px;color:#9a9a9a">Z</div><div class="fld" style="left:1454.3px;top:164.4px;width:50px;height:11.200px"></div><div class="t " style="left:1456.8px;top:164.5px;color:#9a9a9a">1</div>
<svg class="a" style="left:1287.5px;top:166.3px;" width="10" height="8" viewBox="0 0 10 8"><path d="M3.800 2.200l-1-1a1.600 1.600 0 0 0-2.200 2.200l1.300 1.300M6.200 5.800l1 1a1.600 1.600 0 0 0 2.200-2.200L8.100 3.300M1 7.600L9 .4" fill="none" stroke="#b0b0b0" stroke-width=".9"/></svg>
<div class="a" style="left:1153.5px;top:181.5px;width:342px;height:1px;background:#1a1a1a;"></div><div class="a" style="left:1153.5px;top:182.5px;width:342px;height:13px;background:#3e3e3e;"></div>
<svg class="a" style="left:1156.5px;top:186.2px;" width="7" height="6" viewBox="0 0 7 6"><path d="M0 0h6l-3 5z" fill="#7c7c7c"/></svg>
<svg class="a" style="left:1166.3px;top:184.3px;" width="9" height="9" viewBox="0 0 10 10"><rect x=".5" y=".5" width="9" height="9" fill="none" stroke="#6db4e2" stroke-width="1"/><path d="M3.500 .5v9M6.500 .5v9M.5 3.500h9M.5 6.500h9" stroke="#6db4e2" stroke-width=".9"/></svg>
<div class="t b" style="left:1192.6px;top:183.5px;color:#dedede;letter-spacing:-.14px">Sardine_001 (Mesh Filter)</div>
<svg class="a" style="left:1476px;top:185.4px;" width="7.2" height="7.2" viewBox="0 0 7.2 7.2"><circle cx="3.600" cy="3.600" r="3.500" fill="#d0d0d0"/><text x="3.600" y="5.900" font-size="6.400" font-weight="700" text-anchor="middle" fill="#3e3e3e" font-family="Liberation Sans, sans-serif">?</text></svg><svg class="a" style="left:1489px;top:185.4px;" width="8" height="7.2" viewBox="0 0 8 7.2"><path d="M0 1.800h8M0 5.400h8" stroke="#c4c4c4" stroke-width=".9"/><rect x="4.600" y=".4" width="1.700" height="2.800" fill="#c4c4c4"/><rect x="1.600" y="4" width="1.700" height="2.800" fill="#c4c4c4"/></svg>
<div class="t " style="left:1164.8px;top:198.8px;color:#b4b4b4">Mesh</div>
<div class="fld" style="left:1302.500px;top:198.200px;width:200px;height:11.200px"></div>
<svg class="a" style="left:1304.5px;top:200.2px;" width="7" height="7" viewBox="0 0 7 7"><rect x="0" y="0" width="7" height="7" fill="#4d9ad6"/><path d="M2.300 0v7M4.700 0v7M0 2.300h7M0 4.700h7" stroke="#2a2a2a" stroke-width=".6"/></svg>
<div class="t " style="left:1313.2px;top:198.8px;color:#c8c8c8">Sardine_001</div>
<div class="a" style="left:1153.5px;top:214.5px;width:342px;height:1px;background:#1a1a1a;"></div><div class="a" style="left:1153.5px;top:215.5px;width:342px;height:13px;background:#3e3e3e;"></div>
<svg class="a" style="left:1156.5px;top:219px;" width="7" height="6" viewBox="0 0 7 6"><path d="M0 0h6l-3 5z" fill="#7c7c7c"/></svg>
<svg class="a" style="left:1166.3px;top:217px;" width="9" height="9.9" viewBox="0 0 10 11"><rect x=".5" y=".5" width="9" height="9" fill="none" stroke="#6db4e2" stroke-width="1"/><path d="M3.500 .5v9M6.500 .5v9M.5 3.500h9M.5 6.500h9" stroke="#6db4e2" stroke-width=".9"/><rect x="5" y="6.200" width="4.600" height="3.400" fill="#3e3e3e" stroke="#d0d0d0" stroke-width=".8"/></svg>
<div class="a" style="left:1179.5px;top:217.5px;width:8.6px;height:8.6px;background:#222;border:1px solid #1a1a1a;border-radius:1.500px"></div><svg class="a" style="left:1180.5px;top:218.7px;" width="7" height="6" viewBox="0 0 7 6"><path d="M.8 3.200l1.900 1.900L6 1" fill="none" stroke="#e8e8e8" stroke-width="1.200"/></svg>
<div class="t b" style="left:1192.6px;top:216.5px;color:#dedede;letter-spacing:-.12px">Mesh Renderer</div>
<svg class="a" style="left:1476px;top:218.4px;" width="7.2" height="7.2" viewBox="0 0 7.2 7.2"><circle cx="3.600" cy="3.600" r="3.500" fill="#d0d0d0"/><text x="3.600" y="5.900" font-size="6.400" font-weight="700" text-anchor="middle" fill="#3e3e3e" font-family="Liberation Sans, sans-serif">?</text></svg><svg class="a" style="left:1489px;top:218.4px;" width="8" height="7.2" viewBox="0 0 8 7.2"><path d="M0 1.800h8M0 5.400h8" stroke="#c4c4c4" stroke-width=".9"/><rect x="4.600" y=".4" width="1.700" height="2.800" fill="#c4c4c4"/><rect x="1.600" y="4" width="1.700" height="2.800" fill="#c4c4c4"/></svg>
<svg class="a" style="left:1157.5px;top:234.7px;" width="5" height="6" viewBox="0 0 5 6"><path d="M0 0l4.600 3L0 6z" fill="#7c7c7c"/></svg>
<div class="t b" style="left:1165.9px;top:232.7px;color:#d2d2d2">Materials</div>
<div class="fld" style="left:1480.800px;top:232px;width:20px;height:11.200px"></div>
<div class="t " style="left:1483.5px;top:232.2px;">1</div>
<svg class="a" style="left:1156.8px;top:249.0px;" width="6" height="5" viewBox="0 0 6 5"><path d="M0 0h6l-3 5z" fill="#7c7c7c"/></svg><div class="t b" style="left:1165.9px;top:246.1px;color:#d2d2d2">Lighting</div>
<div class="t " style="left:1174.7px;top:258.5px;color:#c4c4c4">Cast Shadows</div><div class="dd" style="left:1302.600px;top:258.9px;width:200px;height:10.300px;background:#515151"></div><div class="t " style="left:1304.6px;top:258.5px;color:#dcdcdc">On</div>
<div class="t " style="left:1174.7px;top:272.0px;">Receive Shadows</div><div class="a" style="left:1302.6px;top:273.1px;width:8.4px;height:8.4px;background:#222;border:1px solid #1a1a1a;border-radius:1.500px"></div><svg class="a" style="left:1303.6px;top:274.3px;" width="7" height="6" viewBox="0 0 7 6"><path d="M.8 3.200l1.900 1.900L6 1" fill="none" stroke="#e8e8e8" stroke-width="1.200"/></svg>
<div class="t " style="left:1174.7px;top:285.1px;">Contribute Global Illumination</div><div class="a" style="left:1302.6px;top:286.20000000000005px;width:8.4px;height:8.4px;background:#222;border:1px solid #1a1a1a;border-radius:1.500px"></div>
<div class="t " style="left:1174.7px;top:298.5px;color:#8e8e8e">Receive Global Illumination</div><div class="dd" style="left:1302.600px;top:298.9px;width:200px;height:10.300px;background:#484848"></div><div class="t " style="left:1304.6px;top:298.5px;color:#9a9a9a">Light Probes</div>
<svg class="a" style="left:1156.8px;top:314.9px;" width="6" height="5" viewBox="0 0 6 5"><path d="M0 0h6l-3 5z" fill="#7c7c7c"/></svg><div class="t b" style="left:1165.9px;top:312.0px;color:#d2d2d2">Probes</div>
<div class="t " style="left:1174.7px;top:325.1px;color:#c4c4c4">Light Probes</div><div class="dd" style="left:1302.600px;top:325.5px;width:200px;height:10.300px;background:#515151"></div><div class="t " style="left:1304.6px;top:325.1px;color:#dcdcdc">Blend Probes</div>
<div class="t " style="left:1174.7px;top:337.4px;color:#c4c4c4">Reflection Probes</div><div class="dd" style="left:1302.600px;top:337.8px;width:200px;height:10.300px;background:#515151"></div><div class="t " style="left:1304.6px;top:337.4px;color:#dcdcdc">Blend Probes</div>
<div class="t " style="left:1174.7px;top:351.1px;">Anchor Override</div>
<div class="fld" style="left:1302.600px;top:350.800px;width:200px;height:11.200px"></div>
<div class="t " style="left:1304.6px;top:351.1px;color:#d6d6d6">None (Transform)</div>
<svg class="a" style="left:1156.8px;top:367.0px;" width="6" height="5" viewBox="0 0 6 5"><path d="M0 0h6l-3 5z" fill="#7c7c7c"/></svg><div class="t b" style="left:1165.9px;top:364.1px;color:#d2d2d2">Additional Settings</div>
<div class="t " style="left:1174.7px;top:377.2px;color:#c4c4c4">Motion Vectors</div><div class="dd" style="left:1302.600px;top:377.6px;width:200px;height:10.300px;background:#515151"></div><div class="t " style="left:1304.6px;top:377.2px;color:#dcdcdc">Per Object Motion</div>
<div class="t " style="left:1174.7px;top:389.5px;">Dynamic Occlusion</div><div class="a" style="left:1302.6px;top:390.6px;width:8.4px;height:8.4px;background:#222;border:1px solid #1a1a1a;border-radius:1.500px"></div><svg class="a" style="left:1303.6px;top:391.8px;" width="7" height="6" viewBox="0 0 7 6"><path d="M.8 3.200l1.900 1.900L6 1" fill="none" stroke="#e8e8e8" stroke-width="1.200"/></svg>
<div class="a" style="left:1153.5px;top:405.5px;width:342px;height:1px;background:#1e1e1e;"></div>
<div class="a" style="left:1153.5px;top:406.5px;width:342px;height:35px;background:#3a3a3a;"></div>
<svg class="a" style="left:1163px;top:410px;" width="20" height="20" viewBox="0 0 20 20"><defs><radialGradient id="mb" cx=".38" cy=".3" r=".75"><stop offset="0" stop-color="#4c586a"/><stop offset=".5" stop-color="#1d2430"/><stop offset="1" stop-color="#0a0c10"/></radialGradient></defs><circle cx="10" cy="10" r="9.600" fill="url(#mb)"/><path d="M4 8l6 1.500 5-3" stroke="#3a4656" stroke-width="1.400" fill="none" opacity=".7"/></svg>
<svg class="a" style="left:1156.5px;top:431.5px;" width="5" height="6" viewBox="0 0 5 6"><path d="M0 0l4.600 3L0 6z" fill="#7c7c7c"/></svg>
<div class="t " style="left:1189.5px;top:409.5px;font-size:9.050px;color:#bdbdbd">Sardine_Albedo(BaseColor) (Material)</div>
<svg class="a" style="left:1485px;top:411.5px;" width="7.2" height="7.2" viewBox="0 0 7.2 7.2"><circle cx="3.600" cy="3.600" r="3.500" fill="#d0d0d0"/><text x="3.600" y="5.900" font-size="6.400" font-weight="700" text-anchor="middle" fill="#3e3e3e" font-family="Liberation Sans, sans-serif">?</text></svg>
<div class="t " style="left:1187.5px;top:425.7px;color:#b8b8b8">Shader</div>
<div class="dd" style="left:1222px;top:426px;width:227px;height:10.300px"></div>
<div class="t " style="left:1224px;top:425.7px;color:#dedede">Standard</div>
<svg class="a" style="left:1441px;top:429.6px;" width="5" height="4" viewBox="0 0 5 4"><path d="M0 0h5l-2.500 3z" fill="#d0d0d0"/></svg>
<div class="btn" style="left:1453.400px;top:426px;width:26.600px;height:10.300px"></div>
<div class="t " style="left:1453.4px;top:425.7px;width:26.600px;text-align:center;color:#dedede">Edit...</div>
<div class="btn" style="left:1483px;top:426px;width:16px;height:10.300px"></div>
<svg class="a" style="left:1486px;top:428px;" width="8" height="7" viewBox="0 0 8 7"><path d="M0 1h8M2 3.500h6M2 6h6" stroke="#c8c8c8" stroke-width=".9"/></svg>
<div class="a" style="left:1153.5px;top:441.2px;width:342px;height:1px;background:#1c1c1c;"></div>
<div class="a" style="left:1153.5px;top:449px;width:342px;height:1px;background:#2a2a2a;"></div>
<div class="btn" style="left:1258.800px;top:456px;width:149.600px;height:14px"></div>
<div class="t " style="left:1258.8px;top:457.7px;width:149.600px;text-align:center;color:#dedede">Add Component</div>
<svg class="a" style="left:1255px;top:684px" width="190" height="74" viewBox="1255 684 190 74">
<defs><pattern id="st" x="0" y="689.500" width="6" height="4.030" patternUnits="userSpaceOnUse"><rect x="0" y="0" width="6" height="3.150" fill="#ababab"/></pattern></defs>
<text x="1264.500" y="724.700" font-family="Liberation Sans, sans-serif" font-size="48.300" font-weight="700" font-style="italic" fill="url(#st)" stroke="url(#st)" stroke-width="2.200" stroke-linejoin="miter" textLength="168" lengthAdjust="spacingAndGlyphs">MAXVE</text>
<text x="1265.500" y="747.700" font-family="DejaVu Sans, Liberation Sans, sans-serif" font-size="19.500" font-style="italic" fill="#9e9e9e" textLength="163.500" lengthAdjust="spacingAndGlyphs">www.maxve.org</text>
</svg><div class="a" style="left:0px;top:574.3px;width:1152px;height:1.4px;background:#1f1f1f;"></div>
<div class="a" style="left:0px;top:575.5px;width:1152px;height:12.5px;background:#282828;"></div>
<div class="a" style="left:0px;top:575.8px;width:33.7px;height:12.2px;background:#3c3c3c;"></div>
<div class="t " style="left:-3.5px;top:577.4px;color:#d0d0d0">Project</div>
<svg class="a" style="left:39.3px;top:578.3px;" width="7" height="8" viewBox="0 0 7 8"><rect x=".5" y=".5" width="6" height="7" rx="1" fill="#d0d0d0"/><path d="M1.800 2.400h3.400M1.800 4h3.400M1.800 5.600h2" stroke="#282828" stroke-width=".8"/></svg>
<div class="t " style="left:50px;top:577.4px;color:#d0d0d0">Console</div>
<svg class="a" style="left:1128px;top:577.2px;" width="8" height="9" viewBox="0 0 8 9"><path d="M1.2 4.2V2.6a2.1 2.1 0 0 1 4.1-.6" fill="none" stroke="#c4c4c4" stroke-width="1"/><rect x=".6" y="4.2" width="5.6" height="3.6" rx=".7" fill="none" stroke="#c4c4c4" stroke-width="1.1"/></svg>
<svg class="a" style="left:1141.8px;top:577.2px;" width="3" height="10" viewBox="0 0 3 10"><circle cx="1.2" cy="1.2" r="1" fill="#c4c4c4"/><circle cx="1.2" cy="4.6" r="1" fill="#c4c4c4"/><circle cx="1.2" cy="8" r="1" fill="#c4c4c4"/></svg>
<div class="a" style="left:0px;top:588px;width:1152px;height:13.5px;background:#3c3c3c;"></div>
<div class="t " style="left:-3.5px;top:588.5px;color:#999;font-size:8px">+</div>
<div class="fld" style="left:846.500px;top:589.600px;width:195.500px;height:10.400px;border-radius:3px"></div>
<svg class="a" style="left:850.5px;top:592.5px;" width="6" height="6" viewBox="0 0 6 6"><circle cx="2.200" cy="2.200" r="1.600" fill="none" stroke="#b8b8b8" stroke-width=".9"/><path d="M3.400 3.400l2 2" stroke="#b8b8b8" stroke-width="1"/></svg>
<svg class="a" style="left:1043.5px;top:590.5px;" width="9" height="9" viewBox="0 0 9 9"><rect x="3" y=".6" width="5.200" height="5.200" fill="none" stroke="#c0c0c0" stroke-width=".9"/><rect x=".6" y="5" width="3" height="3" fill="#3c3c3c" stroke="#c0c0c0" stroke-width=".9"/><path d="M4.200 4.600l2.400-2.400" stroke="#c0c0c0" stroke-width=".8"/></svg>
<div class="a" style="left:1055.5px;top:589px;width:1px;height:11.5px;background:#333;"></div><div class="a" style="left:1072.5px;top:589px;width:1px;height:11.5px;background:#333;"></div><div class="a" style="left:1089.5px;top:589px;width:1px;height:11.5px;background:#333;"></div><div class="a" style="left:1106.5px;top:589px;width:1px;height:11.5px;background:#333;"></div><div class="a" style="left:1123.5px;top:589px;width:1px;height:11.5px;background:#333;"></div>
<svg class="a" style="left:1059px;top:590px;" width="10" height="10" viewBox="0 0 10 10"><rect x="2" y=".4" width="3.600" height="3.600" fill="#c0c0c0"/><circle cx="3.200" cy="7" r="2.200" fill="#c0c0c0"/><path d="M6.400 3.600l3 4.600H5.600z" fill="#c0c0c0"/></svg>
<svg class="a" style="left:1077px;top:590.5px;" width="9" height="9" viewBox="0 0 9 9"><path d="M.6 5.200L5 .8l3.400.2.200 3.400L4.200 8.800z" fill="#c0c0c0"/><circle cx="6.600" cy="2.600" r=".8" fill="#3c3c3c"/></svg>
<svg class="a" style="left:1093.5px;top:589.8px;" width="10" height="10" viewBox="0 0 10 10"><circle cx="5" cy="5" r="4.600" fill="#e2e2e2"/><path d="M5 2.200v3.600" stroke="#3c3c3c" stroke-width="1.400"/><circle cx="5" cy="7.600" r=".8" fill="#3c3c3c"/></svg>
<svg class="a" style="left:1111.5px;top:590.6px;" width="8" height="8" viewBox="0 0 8 8"><path d="M4 .4l1.100 2.500 2.700.3-2 1.800.6 2.700L4 6.300 1.600 7.700l.6-2.700-2-1.800 2.700-.3z" fill="#8c8c8c"/></svg>
<svg class="a" style="left:1126.5px;top:590px;" width="12" height="10" viewBox="0 0 12 10"><path d="M.8 5C2.400 2.600 4.200 1.800 6 1.800S9.600 2.600 11.200 5C9.600 7.400 7.800 8.200 6 8.200S2.400 7.400.8 5z" fill="none" stroke="#c0c0c0" stroke-width=".9"/><circle cx="6" cy="5" r="1.500" fill="#c0c0c0"/><path d="M2 9.200L10 .8" stroke="#c0c0c0" stroke-width="1"/></svg>
<div class="t " style="left:1138.6px;top:589.9px;color:#c4c4c4">14</div>
<div class="a" style="left:0px;top:601.3px;width:1152px;height:1px;background:#232323;"></div>
<div class="a" style="left:0px;top:602.3px;width:108px;height:198px;background:#383838;"></div>
<div class="a" style="left:108px;top:602.3px;width:8.5px;height:198px;background:#353535;"></div>
<div class="a" style="left:116.4px;top:602.3px;width:1px;height:198px;background:#232323;"></div>
<div class="a" style="left:109.8px;top:613px;width:4.8px;height:141px;background:#5e5e5e;border-radius:2.400px"></div>
<svg class="a" style="left:109.2px;top:605px;" width="6" height="4" viewBox="0 0 6 4"><path d="M3 0l3 3.600H0z" fill="#9a9a9a"/></svg>
<svg class="a" style="left:109.2px;top:796.5px;" width="6" height="4" viewBox="0 0 6 4"><path d="M0 0h6L3 3.600z" fill="#9a9a9a"/></svg>
<div class="t b" style="left:4px;top:602.5px;color:#d6d6d6">Favorites</div>
<svg class="a" style="left:1.5px;top:614.1px;" width="8" height="8" viewBox="0 0 8 8"><circle cx="3" cy="3" r="2.300" fill="none" stroke="#b4b4b4" stroke-width=".9"/><path d="M4.700 4.700l2.600 2.600" stroke="#b4b4b4" stroke-width="1.100"/></svg><div class="t " style="left:12px;top:612.6px;">All Materials</div>
<svg class="a" style="left:1.5px;top:624.6px;" width="8" height="8" viewBox="0 0 8 8"><circle cx="3" cy="3" r="2.300" fill="none" stroke="#b4b4b4" stroke-width=".9"/><path d="M4.700 4.700l2.600 2.600" stroke="#b4b4b4" stroke-width="1.100"/></svg><div class="t " style="left:12px;top:623.1px;">All Models</div>
<svg class="a" style="left:1.5px;top:635px;" width="8" height="8" viewBox="0 0 8 8"><circle cx="3" cy="3" r="2.300" fill="none" stroke="#b4b4b4" stroke-width=".9"/><path d="M4.700 4.700l2.600 2.600" stroke="#b4b4b4" stroke-width="1.100"/></svg><div class="t " style="left:12px;top:633.5px;">All Prefabs</div>
<div class="a" style="left:0px;top:653.6px;width:108px;height:10.5px;background:#4d4d4d;"></div>
<svg class="a" style="left:-1px;top:657px;" width="4" height="4" viewBox="0 0 4 4"><path d="M0 3.600L3.600 0v3.600z" fill="#9a9a9a"/></svg>
<div class="t b" style="left:4px;top:653.8px;color:#e2e2e2;letter-spacing:.25px">Assets</div>
<svg class="a" style="left:2px;top:665.8px;" width="9" height="8" viewBox="0 0 9 8"><path d="M.3 1.200Q.3.500 1 .5h2.200l.9 1h3.600q.6 0 .6.700v4.200q0 .6-.6.600H1q-.7 0-.7-.6z" fill="#c2c2c2"/></svg><div class="t" style="left:12px;top:664.5px;max-width:95.500px;overflow:hidden;letter-spacing:0">Materials</div>
<svg class="a" style="left:2px;top:676.3px;" width="9" height="8" viewBox="0 0 9 8"><path d="M.3 1.200Q.3.500 1 .5h2.200l.9 1h3.600q.6 0 .6.700v4.200q0 .6-.6.600H1q-.7 0-.7-.6z" fill="#c2c2c2"/></svg><div class="t" style="left:12px;top:675.0px;max-width:95.500px;overflow:hidden;letter-spacing:-.2px">Sardine_FBX_SubLvl0.fbm</div>
<svg class="a" style="left:2px;top:686.6999999999999px;" width="9" height="8" viewBox="0 0 9 8"><path d="M.3 1.200Q.3.500 1 .5h2.200l.9 1h3.600q.6 0 .6.700v4.200q0 .6-.6.600H1q-.7 0-.7-.6z" fill="#c2c2c2"/></svg><div class="t" style="left:12px;top:685.4px;max-width:95.500px;overflow:hidden;letter-spacing:-.2px">Sardine_FBX_SubLvl1.fbm</div>
<svg class="a" style="left:2px;top:697.0999999999999px;" width="9" height="8" viewBox="0 0 9 8"><path d="M.3 1.200Q.3.500 1 .5h2.200l.9 1h3.600q.6 0 .6.700v4.200q0 .6-.6.600H1q-.7 0-.7-.6z" fill="#c2c2c2"/></svg><div class="t" style="left:12px;top:695.8px;max-width:95.500px;overflow:hidden;letter-spacing:0">Scenes</div>
<svg class="a" style="left:-1px;top:709.4px;" width="4" height="4" viewBox="0 0 4 4"><path d="M0 3.600L3.600 0v3.600z" fill="#9a9a9a"/></svg>
<div class="t b" style="left:4px;top:706.1px;color:#d6d6d6;letter-spacing:.25px">Packages</div>
<svg class="a" style="left:2px;top:717.9px;" width="9" height="8" viewBox="0 0 9 8"><path d="M.3 1.200Q.3.500 1 .5h2.200l.9 1h3.600q.6 0 .6.700v4.200q0 .6-.6.600H1q-.7 0-.7-.6z" fill="#c2c2c2"/></svg><div class="t " style="left:12px;top:716.6px;">Code Coverage</div>
<svg class="a" style="left:2px;top:728.42px;" width="9" height="8" viewBox="0 0 9 8"><path d="M.3 1.200Q.3.500 1 .5h2.200l.9 1h3.600q.6 0 .6.700v4.200q0 .6-.6.600H1q-.7 0-.7-.6z" fill="#c2c2c2"/></svg><div class="t " style="left:12px;top:727.1px;">Custom NUnit</div>
<svg class="a" style="left:2px;top:738.9399999999999px;" width="9" height="8" viewBox="0 0 9 8"><path d="M.3 1.200Q.3.500 1 .5h2.200l.9 1h3.600q.6 0 .6.700v4.200q0 .6-.6.600H1q-.7 0-.7-.6z" fill="#c2c2c2"/></svg><div class="t " style="left:12px;top:737.6px;">Editor Coroutines</div>
<svg class="a" style="left:2px;top:749.4599999999999px;" width="9" height="8" viewBox="0 0 9 8"><path d="M.3 1.200Q.3.500 1 .5h2.200l.9 1h3.600q.6 0 .6.700v4.200q0 .6-.6.600H1q-.7 0-.7-.6z" fill="#c2c2c2"/></svg><div class="t " style="left:12px;top:748.2px;">JetBrains Rider Editor</div>
<svg class="a" style="left:2px;top:759.98px;" width="9" height="8" viewBox="0 0 9 8"><path d="M.3 1.200Q.3.500 1 .5h2.200l.9 1h3.600q.6 0 .6.700v4.200q0 .6-.6.600H1q-.7 0-.7-.6z" fill="#c2c2c2"/></svg><div class="t " style="left:12px;top:758.7px;">Profile Analyzer</div>
<svg class="a" style="left:2px;top:770.5px;" width="9" height="8" viewBox="0 0 9 8"><path d="M.3 1.200Q.3.500 1 .5h2.200l.9 1h3.600q.6 0 .6.700v4.200q0 .6-.6.600H1q-.7 0-.7-.6z" fill="#c2c2c2"/></svg><div class="t " style="left:12px;top:769.2px;">Settings Manager</div>
<svg class="a" style="left:2px;top:781.02px;" width="9" height="8" viewBox="0 0 9 8"><path d="M.3 1.200Q.3.500 1 .5h2.200l.9 1h3.600q.6 0 .6.700v4.200q0 .6-.6.600H1q-.7 0-.7-.6z" fill="#c2c2c2"/></svg><div class="t " style="left:12px;top:779.7px;">Test Framework</div>
<svg class="a" style="left:2px;top:791.54px;" width="9" height="8" viewBox="0 0 9 8"><path d="M.3 1.200Q.3.500 1 .5h2.200l.9 1h3.600q.6 0 .6.700v4.200q0 .6-.6.600H1q-.7 0-.7-.6z" fill="#c2c2c2"/></svg><div class="t " style="left:12px;top:790.2px;">TextMeshPro</div>
<div class="a" style="left:117.4px;top:602.3px;width:1034.6px;height:13.4px;background:#3e3e3e;"></div>
<div class="a" style="left:117.4px;top:615.7px;width:1034.6px;height:176px;background:#333333;"></div>
<div class="t b" style="left:120.4px;top:604.0px;color:#d6d6d6;letter-spacing:.2px">Assets</div>
<div class="a" style="left:117.4px;top:791px;width:1034.6px;height:9px;background:#3c3c3c;"></div>
<div class="a" style="left:1104px;top:797.9px;width:36.5px;height:0.9px;background:#707070;"></div>
<div class="a" style="left:1122.500px;top:795.200px;width:6.400px;height:6.400px;border-radius:50%;background:#c4c4c4"></div>
<svg class="a" style="left:132.5px;top:630px;" width="31.5" height="26.6" viewBox="0 0 32 26.600"><path d="M0 3Q0 0 3 0h8.400q1.400 0 2.200 1.200L15.200 4H29q3 0 3 3v16.600q0 3-3 3H3q-3 0-3-3z" fill="#c4c4c4"/></svg>
<svg class="a" style="left:182.2px;top:630px;" width="31.5" height="26.6" viewBox="0 0 32 26.600"><path d="M0 3Q0 0 3 0h8.400q1.400 0 2.200 1.200L15.200 4H29q3 0 3 3v16.600q0 3-3 3H3q-3 0-3-3z" fill="#c4c4c4"/></svg>
<svg class="a" style="left:231.9px;top:630px;" width="31.5" height="26.6" viewBox="0 0 32 26.600"><path d="M0 3Q0 0 3 0h8.400q1.400 0 2.200 1.200L15.200 4H29q3 0 3 3v16.600q0 3-3 3H3q-3 0-3-3z" fill="#c4c4c4"/></svg>
<svg class="a" style="left:281.6px;top:630px;" width="31.5" height="26.6" viewBox="0 0 32 26.600"><path d="M0 3Q0 0 3 0h8.400q1.400 0 2.200 1.200L15.200 4H29q3 0 3 3v16.600q0 3-3 3H3q-3 0-3-3z" fill="#c4c4c4"/></svg>
<div class="t " style="left:122.9px;top:664.6px;width:50px;text-align:center;font-size:7.150px;color:#c4c4c4">Materials</div>
<div class="t " style="left:172.60000000000002px;top:664.6px;width:50px;text-align:center;font-size:7.150px;color:#c4c4c4">Sardine_F...</div>
<div class="t " style="left:222.3px;top:664.6px;width:50px;text-align:center;font-size:7.150px;color:#c4c4c4">Sardine_F...</div>
<div class="t " style="left:272.0px;top:664.6px;width:50px;text-align:center;font-size:7.150px;color:#c4c4c4">Scenes</div>
<div class="t " style="left:321.70000000000005px;top:664.6px;width:50px;text-align:center;font-size:7.150px;color:#c4c4c4">Sardine_Al...</div>
<svg class="a" style="left:374.5px;top:666px;" width="7.6" height="7.6" viewBox="0 0 10 10"><path d="M5 .5l4.2 2.1v4.8L5 9.5.8 7.4V2.6z" fill="#dfe9f0"/><path d="M5 4.7l4.2-2.1v4.8L5 9.5z" fill="#6fb5e6"/><path d="M.8 2.6L5 4.7v4.8L.8 7.4z" fill="#eeeeee"/><path d="M2 3.4v2.2l1.6.8V4.2z" fill="#5a6670"/></svg>
<div class="t " style="left:383.29999999999995px;top:664.6px;font-size:7.150px;color:#c4c4c4">Sardine_F...</div>
<svg class="a" style="left:424.20000000000005px;top:666px;" width="7.6" height="7.6" viewBox="0 0 10 10"><path d="M5 .5l4.2 2.1v4.8L5 9.5.8 7.4V2.6z" fill="#dfe9f0"/><path d="M5 4.7l4.2-2.1v4.8L5 9.5z" fill="#6fb5e6"/><path d="M.8 2.6L5 4.7v4.8L.8 7.4z" fill="#eeeeee"/><path d="M2 3.4v2.2l1.6.8V4.2z" fill="#5a6670"/></svg>
<div class="t " style="left:433.0px;top:664.6px;font-size:7.150px;color:#c4c4c4">Sardine_F...</div>
<div class="t " style="left:470.80000000000007px;top:664.6px;width:50px;text-align:center;font-size:7.150px;color:#c4c4c4">Sardine_Gl...</div>
<div class="t " style="left:520.5px;top:664.6px;width:50px;text-align:center;font-size:7.150px;color:#c4c4c4">Sardine_M...</div>
<div class="t " style="left:570.2px;top:664.6px;width:50px;text-align:center;font-size:7.150px;color:#c4c4c4">Sardine_N...</div>
<div class="t " style="left:619.9px;top:664.6px;width:50px;text-align:center;font-size:7.150px;color:#c4c4c4">Sardine_R...</div>
<svg class="a" style="left:327.8px;top:623.700px" width="39.700" height="39.500" viewBox="0 0 40 40" preserveAspectRatio="none"><rect width="40" height="40" fill="#b9c3cf"/><path d="M0 0h9l-3 9 4 8-6 9-4-2z" fill="#4e3a28"/><path d="M0 26l8 2 4 12H0z" fill="#6c675a"/><path d="M12 40l4-8 14-2 10 4v6z" fill="#8d948f"/><path d="M30 20l10-4v16l-9-2z" fill="#26352f"/><path d="M14 0h26v6L22 8z" fill="#c9d2dc"/><path d="M9 33Q8 28 16 18T34 4q4-.6 2 3-6 12-14 20T9 33z" fill="#335c86"/><circle cx="33" cy="7" r="2" fill="#1f3550"/><path d="M20 34l16-2v6H22z" fill="#a9a18c"/><circle cx="8" cy="22" r="2.400" fill="#6f4a22"/></svg>
<svg class="a" style="left:377.5px;top:623.700px" width="39.700" height="39.500" viewBox="0 0 40 40" preserveAspectRatio="none"><rect width="40" height="40" fill="#525252"/><path d="M7 15l2.600 3.400L7.600 22l3.600-2.200 6 1.600 6 3 1.600 3 2-2.400 7 1.800 3.400-1.400-2.600-3-7.600-3.400-5.200-1.800-1.400-3-2 2.400-6.600-.6z" fill="#383d45"/></svg>
<div class="a" style="left:412.5px;top:637.600px;width:10px;height:10px;border-radius:50%;background:#e4e4e4"></div>
<svg class="a" style="left:415.9px;top:640.1px;" width="5" height="5" viewBox="0 0 5 5"><path d="M0 0l4.400 2.500L0 5z" fill="#555"/></svg>
<svg class="a" style="left:427.2px;top:623.700px" width="39.700" height="39.500" viewBox="0 0 40 40" preserveAspectRatio="none"><rect width="40" height="40" fill="#525252"/><path d="M7 15l2.600 3.400L7.600 22l3.600-2.200 6 1.600 6 3 1.600 3 2-2.400 7 1.800 3.400-1.400-2.600-3-7.600-3.400-5.200-1.800-1.400-3-2 2.400-6.600-.6z" fill="#383d45"/></svg>
<div class="a" style="left:462.2px;top:637.600px;width:10px;height:10px;border-radius:50%;background:#e4e4e4"></div>
<svg class="a" style="left:465.6px;top:640.1px;" width="5" height="5" viewBox="0 0 5 5"><path d="M0 0l4.400 2.500L0 5z" fill="#555"/></svg>
<svg class="a" style="left:476.9px;top:623.700px" width="39.700" height="39.500" viewBox="0 0 40 40" preserveAspectRatio="none"><rect width="40" height="40" fill="#d4d4d4"/><path d="M8 34Q6 28 15 17T33 4q5-1 3 4-6 12-14 19T8 34z" fill="#a8a8a8"/><path d="M14 27Q22 16 31 9" stroke="#8f8f8f" stroke-width="1.600" fill="none"/><path d="M0 0h12l-4 8-8 4z" fill="#efefef"/><path d="M28 24l12-4v20H24z" fill="#e6e6e6"/><path d="M30 28q4-3 8 1t-2 8q-6 0-6-9z" fill="none" stroke="#9c9c9c" stroke-width="1.500"/><path d="M0 26l10 4 6 10H0z" fill="#bcbcbc"/><path d="M10 34h16v6H10z" fill="#c9c9c9"/></svg>
<svg class="a" style="left:526.6px;top:623.700px" width="39.700" height="39.500" viewBox="0 0 40 40" preserveAspectRatio="none"><defs><linearGradient id="mg" x1="8" y1="32" x2="34" y2="6" gradientUnits="userSpaceOnUse"><stop offset="0" stop-color="#8a8a8a"/><stop offset=".5" stop-color="#6a6a6a"/><stop offset="1" stop-color="#3c3c3c"/></linearGradient></defs><rect width="40" height="40" fill="#050505"/><path d="M7 30Q5 22 16 13T35 3q5 0 2 7-5 11-14 18T9 34z" fill="url(#mg)"/><path d="M5 22l9-5 3 8-8 9z" fill="#808080"/><path d="M2 5l7-3 3 4-5 4z" fill="#282828"/><path d="M27 29l5-1 3 4-6 2z" fill="#303030"/><path d="M30 2l6 2-2 4z" fill="#2a2a2a"/></svg>
<svg class="a" style="left:576.3px;top:623.700px" width="39.700" height="39.500" viewBox="0 0 40 40" preserveAspectRatio="none"><rect width="40" height="40" fill="#7f7ff6"/><path d="M9 33Q8 27 16 17T33 5" stroke="#8d86f4" stroke-width="1.600" fill="none" opacity=".5"/><path d="M28 24q6-3 9 2t-3 9q-7-1-6-11z" fill="none" stroke="#958af2" stroke-width="1.400" opacity=".5"/><path d="M2 3q5-2 8 2" stroke="#958af2" stroke-width="1.300" fill="none" opacity=".5"/></svg>
<svg class="a" style="left:626.0px;top:623.700px" width="39.700" height="39.500" viewBox="0 0 40 40" preserveAspectRatio="none"><rect width="40" height="40" fill="#2c2c2c"/><path d="M8 34Q6 28 15 17T33 4q5-1 3 4-6 12-14 19T8 34z" fill="#6f6f6f"/><path d="M14 27Q22 16 31 9" stroke="#565656" stroke-width="1.600" fill="none"/><path d="M0 0h12l-5 9-7 3z" fill="#1a1a1a"/><path d="M27 24l13-4v20H25z" fill="#3b3b3b"/><path d="M30 27q4-3 8 1t-2 8q-6 0-6-9z" fill="none" stroke="#111" stroke-width="1.800"/><path d="M0 27l10 3 5 10H0z" fill="#4a4a4a"/><path d="M12 33h14v5H12z" fill="#8a8a8a" opacity=".7"/></svg>
</body></html>
